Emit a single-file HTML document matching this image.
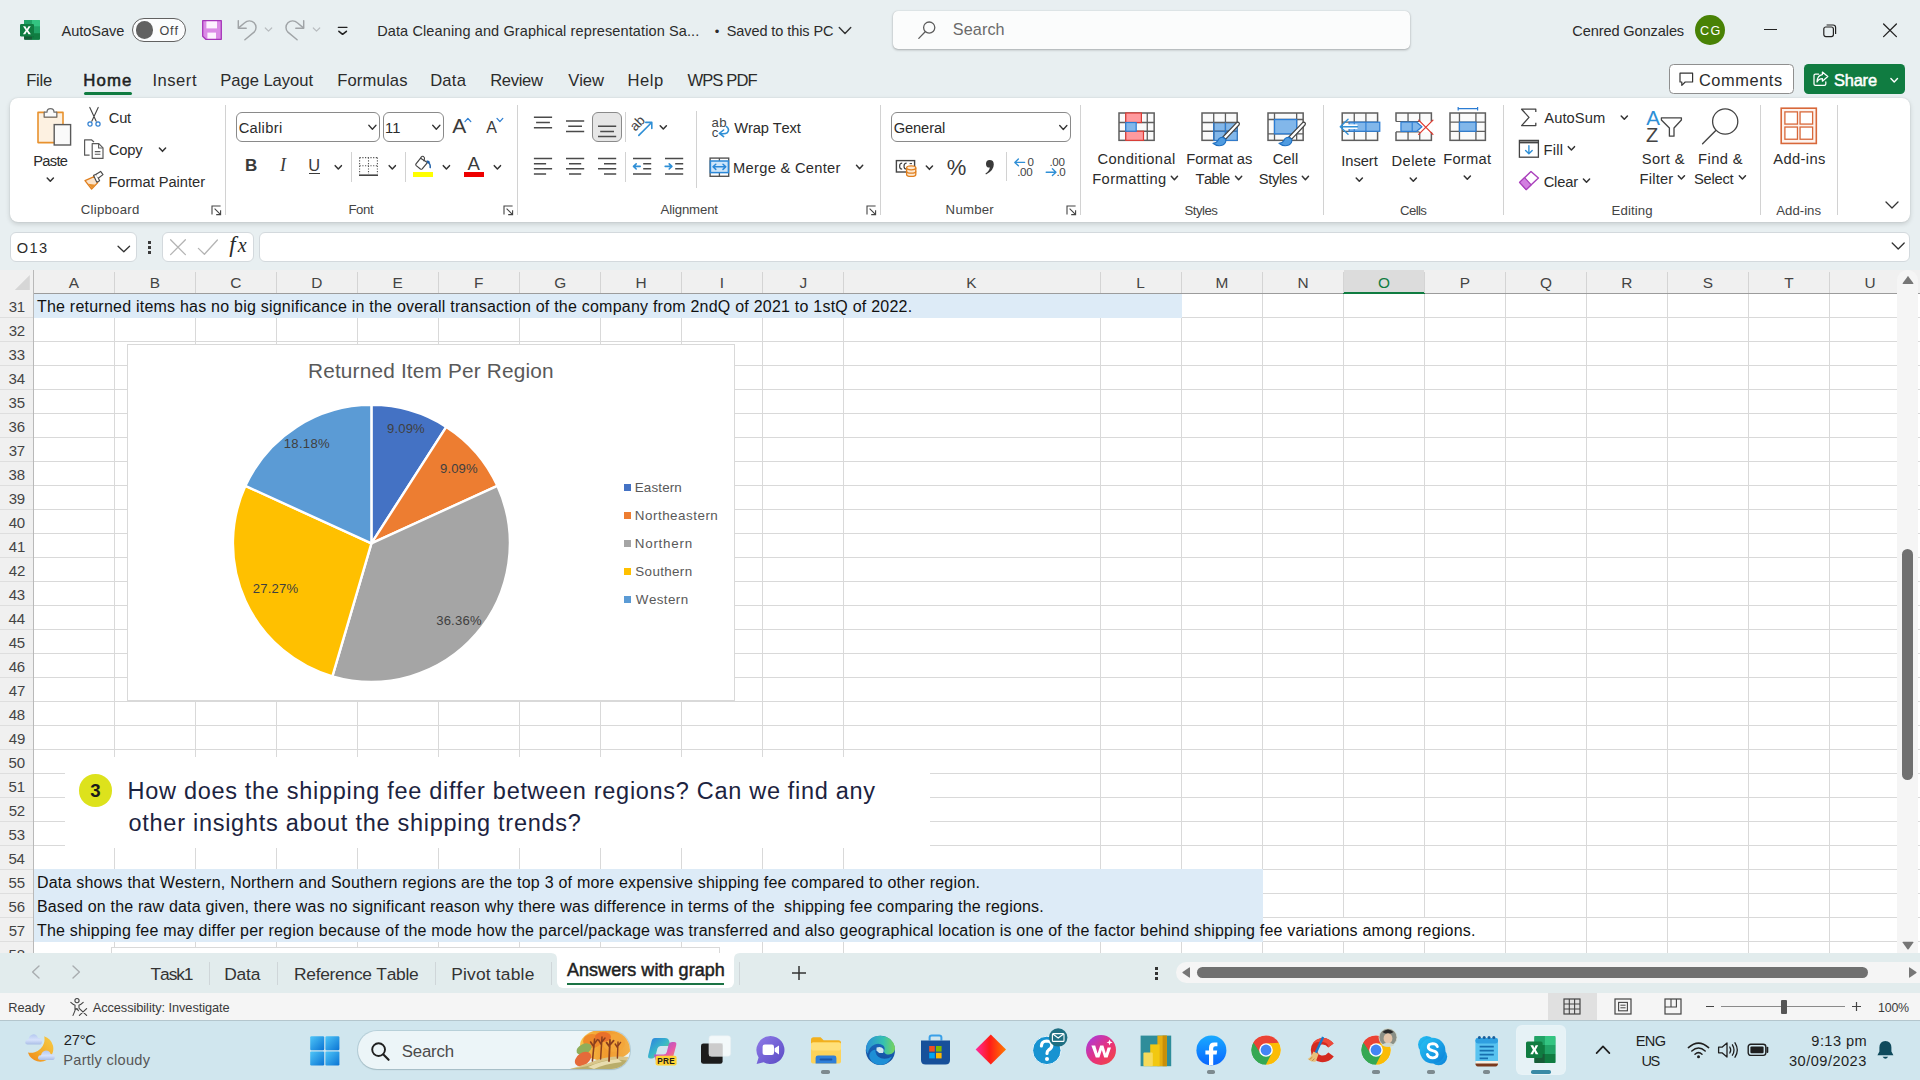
<!DOCTYPE html>
<html><head><meta charset="utf-8"><title>Excel</title><style>
html,body{margin:0;padding:0;overflow:hidden;}
body{width:1920px;height:1080px;overflow:hidden;background:#e8eff1;position:relative;font-family:"Liberation Sans",sans-serif;font-kerning:none;}
.t{position:absolute;white-space:pre;line-height:1;font-kerning:none;}
.b{position:absolute;}
</style></head><body>
<!-- p_title -->
<svg class="b" style="left:19px;top:19px;" width="22" height="22" viewBox="0 0 22 22">
<rect x="5" y="1" width="16" height="19.8" rx="1.2" fill="#21a366"/>
<rect x="5" y="1" width="8" height="6.6" fill="#21a366"/>
<path d="M13 1 H19.8 Q21 1 21 2.2 V7.6 H13 Z" fill="#33c481"/>
<rect x="5" y="7.6" width="8" height="6.6" fill="#107c41"/>
<rect x="13" y="7.6" width="8" height="6.6" fill="#21a366"/>
<path d="M5 14.2 H13 V20.8 H6.2 Q5 20.8 5 19.6 Z" fill="#185c37"/>
<path d="M13 14.2 H21 V19.6 Q21 20.8 19.8 20.8 H13 Z" fill="#107c41"/>
<rect x="6" y="6" width="9" height="12.4" fill="#0b5a2e" opacity="0.35"/>
<rect x="1" y="5" width="14" height="12.4" rx="1.2" fill="#107c41"/>
<path d="M4 7.2 L6.3 7.2 L7.9 10 L9.5 7.2 L11.7 7.2 L9.1 11.2 L11.9 15.3 L9.5 15.3 L7.9 12.5 L6.3 15.3 L3.9 15.3 L6.7 11.2 Z" fill="#fff"/>
</svg>
<span class="t" style="left:61.47px;top:24.00px;font-size:14.6px;color:#2b2b2b;letter-spacing:-0.048px;">AutoSave</span>
<div class="b" style="left:132px;top:17.5px;width:54px;height:24px;border:1px solid #616161;border-radius:12.5px;background:#fbfcfd;box-sizing:border-box;"></div>
<div class="b" style="left:135.6px;top:21.2px;width:17.6px;height:17.6px;border-radius:50%;background:#616161;"></div>
<span class="t" style="left:159.41px;top:25.00px;font-size:12.6px;color:#444;letter-spacing:0.881px;">Off</span>
<svg class="b" style="left:201px;top:19px;" width="22" height="22" viewBox="0 0 22 22">
<path d="M1.7 1.7 H20.3 V20.3 H4.8 L1.7 17.2 Z" fill="#db8be6" stroke="#a535b8" stroke-width="1.3" stroke-linejoin="round"/>
<rect x="5.4" y="2.4" width="10.6" height="7" fill="#fdf1ff"/>
<rect x="6.4" y="13.6" width="8.6" height="6" fill="#fdf1ff"/>
</svg>
<svg class="b" style="left:236px;top:18px;" width="24" height="24" viewBox="0 0 24 24"><path d="M2.3 2.6 V10.2 H10.2" fill="none" stroke="#a0a4a7" stroke-width="1.45" stroke-linecap="round" stroke-linejoin="round"/><path d="M2.6 9.9 L8.7 4.8 A6.6 6.6 0 0 1 18.07 14.17 L8.9 21.7" fill="none" stroke="#a0a4a7" stroke-width="1.45" stroke-linecap="round" stroke-linejoin="round"/></svg>
<svg class="b" style="left:0;top:0;overflow:visible" width="1" height="1"><path d="M265.30 28.00 L268.50 31.20 L271.70 28.00" fill="none" stroke="#b9bdc0" stroke-width="1.2" stroke-linecap="round" stroke-linejoin="round"/></svg>
<svg class="b" style="left:281.9px;top:18px;" width="24" height="24" viewBox="0 0 24 24"><g transform="translate(24,0) scale(-1,1)"><path d="M2.3 2.6 V10.2 H10.2" fill="none" stroke="#a0a4a7" stroke-width="1.45" stroke-linecap="round" stroke-linejoin="round"/><path d="M2.6 9.9 L8.7 4.8 A6.6 6.6 0 0 1 18.07 14.17 L8.9 21.7" fill="none" stroke="#a0a4a7" stroke-width="1.45" stroke-linecap="round" stroke-linejoin="round"/></g></svg>
<svg class="b" style="left:0;top:0;overflow:visible" width="1" height="1"><path d="M313.30 28.00 L316.50 31.20 L319.70 28.00" fill="none" stroke="#b9bdc0" stroke-width="1.2" stroke-linecap="round" stroke-linejoin="round"/></svg>
<svg class="b" style="left:336px;top:24px;" width="14" height="14" viewBox="0 0 14 14"><path d="M2.3 3.3 H11" stroke="#222" stroke-width="1.3" stroke-linecap="round"/><path d="M2.9 7.3 L6.6 10.3 L10.4 7.3" fill="none" stroke="#222" stroke-width="1.6" stroke-linecap="round" stroke-linejoin="round"/></svg>
<span class="t" style="left:377.21px;top:24.00px;font-size:14.5px;color:#2b2b2b;letter-spacing:0.113px;">Data Cleaning and Graphical representation Sa...</span>
<span class="t" style="left:714.79px;top:25.00px;font-size:13px;color:#2b2b2b;">•</span>
<span class="t" style="left:726.65px;top:24.00px;font-size:14.5px;color:#2b2b2b;letter-spacing:-0.074px;">Saved to this PC</span>
<svg class="b" style="left:0;top:0;overflow:visible" width="1" height="1"><path d="M839.25 27.40 L845.00 33.40 L850.75 27.40" fill="none" stroke="#333" stroke-width="1.4" stroke-linecap="round" stroke-linejoin="round"/></svg>
<div class="b" style="left:893px;top:11px;width:517px;height:38px;background:#fbfcfc;border-radius:5px;box-shadow:0 1px 2.5px rgba(0,0,0,.28),0 0 1px rgba(0,0,0,.18);"></div>
<svg class="b" style="left:917px;top:20px;" width="20" height="20" viewBox="0 0 20 20"><circle cx="12.2" cy="7.6" r="5.6" fill="none" stroke="#5c5c5c" stroke-width="1.3"/><path d="M8.2 11.8 L1.8 18.4" stroke="#5c5c5c" stroke-width="1.3" stroke-linecap="round"/></svg>
<span class="t" style="left:952.77px;top:21.00px;font-size:16.2px;color:#6a6a6a;letter-spacing:0.108px;">Search</span>
<span class="t" style="left:1572.27px;top:24.00px;font-size:14.6px;color:#2b2b2b;letter-spacing:-0.119px;">Cenred Gonzales</span>
<div class="b" style="left:1695px;top:15px;width:30px;height:30px;border-radius:50%;background:#498205;"></div>
<span class="t" style="left:1699.97px;top:25.00px;font-size:12.6px;color:#fff;letter-spacing:1.460px;">CG</span>
<div class="b" style="left:1764px;top:29px;width:12.5px;height:1.3px;background:#222;"></div>
<svg class="b" style="left:1822px;top:23px;" width="16" height="16" viewBox="0 0 16 16"><rect x="1.8" y="4" width="9.6" height="9.6" rx="2" fill="none" stroke="#222" stroke-width="1.2"/><path d="M4.6 2 H11 Q13.6 2 13.6 4.6 V11" fill="none" stroke="#222" stroke-width="1.2"/></svg>
<svg class="b" style="left:1882px;top:22px;" width="16" height="16" viewBox="0 0 16 16"><path d="M1.6 2 L14.4 14.6 M14.4 2 L1.6 14.6" stroke="#222" stroke-width="1.3" stroke-linecap="round"/></svg>
<span class="t" style="left:26.14px;top:73.00px;font-size:16.6px;color:#2b2b2b;letter-spacing:-0.218px;">File</span>
<span class="t" style="left:152.47px;top:73.00px;font-size:16.6px;color:#2b2b2b;letter-spacing:0.505px;">Insert</span>
<span class="t" style="left:220.24px;top:73.00px;font-size:16.6px;color:#2b2b2b;letter-spacing:-0.035px;">Page Layout</span>
<span class="t" style="left:337.14px;top:73.00px;font-size:16.6px;color:#2b2b2b;letter-spacing:0.183px;">Formulas</span>
<span class="t" style="left:430.14px;top:73.00px;font-size:16.6px;color:#2b2b2b;letter-spacing:0.261px;">Data</span>
<span class="t" style="left:490.14px;top:73.00px;font-size:16.6px;color:#2b2b2b;letter-spacing:-0.329px;">Review</span>
<span class="t" style="left:568.33px;top:73.00px;font-size:16.6px;color:#2b2b2b;letter-spacing:-0.131px;">View</span>
<span class="t" style="left:627.44px;top:73.00px;font-size:16.6px;color:#2b2b2b;letter-spacing:0.535px;">Help</span>
<span class="t" style="left:687.43px;top:73.00px;font-size:16.6px;color:#2b2b2b;letter-spacing:-0.899px;">WPS PDF</span>
<span class="t" style="left:83.32px;top:73.00px;font-size:16.8px;color:#1f1f1f;letter-spacing:1.102px;-webkit-text-stroke:0.55px #1f1f1f;">Home</span>
<div class="b" style="left:84.4px;top:91.6px;width:47.4px;height:3px;background:#107c41;border-radius:1.5px;"></div>
<div class="b" style="left:1669px;top:64px;width:125px;height:30px;background:#fff;border:1px solid #8f8f8f;border-radius:4.5px;box-sizing:border-box;"></div>
<svg class="b" style="left:1678px;top:71px;" width="17" height="17" viewBox="0 0 17 17"><path d="M2 2.2 H14.6 V11 H7.2 L3.8 14.4 V11 H2 Z" fill="none" stroke="#333" stroke-width="1.2" stroke-linejoin="round"/></svg>
<span class="t" style="left:1698.88px;top:72.00px;font-size:16.4px;color:#2b2b2b;letter-spacing:0.575px;">Comments</span>
<div class="b" style="left:1804px;top:64px;width:101px;height:30px;background:#107c41;border-radius:4.5px;"></div>
<svg class="b" style="left:1812px;top:70px;" width="18" height="18" viewBox="0 0 18 18"><path d="M6.6 4.2 H3.4 Q2 4.2 2 5.6 V14 Q2 15.4 3.4 15.4 H12.4 Q13.8 15.4 13.8 14 V11.8" fill="none" stroke="#fff" stroke-width="1.25" stroke-linecap="round"/><path d="M10.4 2 L15.8 6.6 L10.4 11.2 V8.6 C7.6 8.6 6.2 9.6 5 12 C5.2 7.8 7.2 5 10.4 4.6 Z" fill="none" stroke="#fff" stroke-width="1.25" stroke-linejoin="round"/></svg>
<span class="t" style="left:1833.96px;top:72.00px;font-size:16.4px;color:#fff;letter-spacing:-0.175px;-webkit-text-stroke:0.5px #fff;">Share</span>
<svg class="b" style="left:0;top:0;overflow:visible" width="1" height="1"><path d="M1890.90 78.60 L1894.20 82.00 L1897.50 78.60" fill="none" stroke="#fff" stroke-width="1.4" stroke-linecap="round" stroke-linejoin="round"/></svg>
<!-- p_ribbon -->
<div class="b" style="left:10px;top:98px;width:1900px;height:123.6px;background:#fff;border-radius:8px;box-shadow:0 2px 5px rgba(0,0,0,.15),0 0 1.5px rgba(0,0,0,.12);"></div>
<div class="b" style="left:225.3px;top:104.5px;width:1px;height:110.0px;background:#d2d2d2;"></div>
<div class="b" style="left:517px;top:104.5px;width:1px;height:110.0px;background:#d2d2d2;"></div>
<div class="b" style="left:880px;top:104.5px;width:1px;height:110.0px;background:#d2d2d2;"></div>
<div class="b" style="left:1080.2px;top:104.5px;width:1px;height:110.0px;background:#d2d2d2;"></div>
<div class="b" style="left:1323.2px;top:104.5px;width:1px;height:110.0px;background:#d2d2d2;"></div>
<div class="b" style="left:1503.2px;top:104.5px;width:1px;height:110.0px;background:#d2d2d2;"></div>
<div class="b" style="left:1760.3px;top:104.5px;width:1px;height:110.0px;background:#d2d2d2;"></div>
<div class="b" style="left:1837.2px;top:104.5px;width:1px;height:110.0px;background:#d2d2d2;"></div>
<svg class="b" style="left:35px;top:106px;" width="38" height="42" viewBox="0 0 38 42">
<path d="M3 6.4 H9.6 V11 H21.4 V6.4 H28 V36.6 H3 Z" fill="#fdf1e1" stroke="#e8912d" stroke-width="1.6" stroke-linejoin="round"/>
<path d="M9.2 11.2 V6.2 H12 Q12 2.6 15.5 2.6 Q19 2.6 19 6.2 H21.8 V11.2 Z" fill="#fafafa" stroke="#6e6e6e" stroke-width="1.2" stroke-linejoin="round"/>
<rect x="19.2" y="18.6" width="16.4" height="20.4" fill="#fafafa" stroke="#5a5a5a" stroke-width="1.4"/>
</svg>
<span class="t" style="left:33.19px;top:154.00px;font-size:14.7px;color:#2b2b2b;letter-spacing:-0.684px;">Paste</span>
<svg class="b" style="left:0;top:0;overflow:visible" width="1" height="1"><path d="M47.20 177.95 L50.30 181.25 L53.40 177.95" fill="none" stroke="#333" stroke-width="1.5" stroke-linecap="round" stroke-linejoin="round"/></svg>
<svg class="b" style="left:86px;top:106px;" width="16" height="22" viewBox="0 0 16 22">
<path d="M3.8 1.4 L10.2 15.2 M12.2 1.4 L5.8 15.2" stroke="#444" stroke-width="1.1" stroke-linecap="round"/>
<circle cx="4" cy="18" r="2.1" fill="none" stroke="#2f7fd1" stroke-width="1.2"/><circle cx="12" cy="18" r="2.1" fill="none" stroke="#2f7fd1" stroke-width="1.2"/></svg>
<span class="t" style="left:108.86px;top:111.00px;font-size:14.7px;color:#2b2b2b;letter-spacing:-0.320px;">Cut</span>
<svg class="b" style="left:83px;top:138px;" width="22" height="22" viewBox="0 0 22 22">
<path d="M6.6 17.2 H1.6 V1.8 H8.4 L11 4" fill="none" stroke="#5a5a5a" stroke-width="1.2" stroke-linejoin="round"/>
<path d="M9.2 5.6 H15.8 L20 9.8 V20.4 H9.2 Z" fill="#fff" stroke="#5a5a5a" stroke-width="1.2" stroke-linejoin="round"/>
<path d="M15.6 5.8 V10 H19.8" fill="none" stroke="#5a5a5a" stroke-width="1.1"/>
<path d="M11.8 13.6 H17.4 M11.8 16.2 H17.4" stroke="#5a5a5a" stroke-width="1.1"/></svg>
<span class="t" style="left:108.86px;top:143.00px;font-size:14.7px;color:#2b2b2b;letter-spacing:-0.151px;">Copy</span>
<svg class="b" style="left:0;top:0;overflow:visible" width="1" height="1"><path d="M159.40 148.05 L162.50 151.35 L165.60 148.05" fill="none" stroke="#333" stroke-width="1.5" stroke-linecap="round" stroke-linejoin="round"/></svg>
<svg class="b" style="left:83px;top:170px;" width="22" height="21" viewBox="0 0 22 21">
<path d="M2 10.6 L12.2 6.2 L14.8 12.6 L8.6 19 Z" fill="#fbe3c9" stroke="#e07f1e" stroke-width="1.3" stroke-linejoin="round"/>
<path d="M5.2 13.8 L9 18.4 L12.6 14.8 Z" fill="#e8912d"/>
<path d="M10.6 5.4 L13.4 4.2 L16.6 10.8 L13.8 12.2 Z" fill="#fff" stroke="#4a4a4a" stroke-width="1.15" stroke-linejoin="round"/>
<path d="M12.8 4.4 L17.6 1.4 L20 4.6 L15.2 8.2" fill="#fff" stroke="#4a4a4a" stroke-width="1.15" stroke-linejoin="round"/></svg>
<span class="t" style="left:108.39px;top:175.00px;font-size:14.7px;color:#2b2b2b;letter-spacing:-0.037px;">Format Painter</span>
<span class="t" style="left:80.74px;top:203.00px;font-size:13.2px;color:#444;letter-spacing:0.263px;">Clipboard</span>
<svg class="b" style="left:210.5px;top:204.6px;" width="11" height="11" viewBox="0 0 11 11"><path d="M9.6 1 H1 V9.6" fill="none" stroke="#444" stroke-width="1.1"/><path d="M3.6 3.6 L9.4 9.4 M9.6 5.2 V9.6 H5.2" fill="none" stroke="#444" stroke-width="1.1"/></svg>
<div class="b" style="left:236px;top:112px;width:144px;height:29.6px;border:1px solid #8a8a8a;border-radius:6px;box-sizing:border-box;background:#fff;"></div>
<span class="t" style="left:238.66px;top:121.00px;font-size:14.7px;color:#2b2b2b;letter-spacing:0.310px;">Calibri</span>
<svg class="b" style="left:0;top:0;overflow:visible" width="1" height="1"><path d="M368.80 125.30 L372.40 129.30 L376.00 125.30" fill="none" stroke="#333" stroke-width="1.3" stroke-linecap="round" stroke-linejoin="round"/></svg>
<div class="b" style="left:382.6px;top:112px;width:61px;height:29.6px;border:1px solid #8a8a8a;border-radius:6px;box-sizing:border-box;background:#fff;"></div>
<span class="t" style="left:385.08px;top:121.00px;font-size:14.7px;color:#2b2b2b;letter-spacing:-1px;">11</span>
<svg class="b" style="left:0;top:0;overflow:visible" width="1" height="1"><path d="M432.70 125.30 L436.30 129.30 L439.90 125.30" fill="none" stroke="#333" stroke-width="1.3" stroke-linecap="round" stroke-linejoin="round"/></svg>
<span class="t" style="left:452.26px;top:115.00px;font-size:21px;color:#3a3a3a;">A</span>
<svg class="b" style="left:464px;top:117px;" width="8" height="6" viewBox="0 0 8 6"><path d="M1 4.6 L3.9 1.4 L6.8 4.6" fill="none" stroke="#2f7fd1" stroke-width="1.3" stroke-linecap="round" stroke-linejoin="round"/></svg>
<span class="t" style="left:486.17px;top:120.00px;font-size:16px;color:#3a3a3a;">A</span>
<svg class="b" style="left:496px;top:117px;" width="8" height="6" viewBox="0 0 8 6"><path d="M1 1.4 L3.9 4.6 L6.8 1.4" fill="none" stroke="#2f7fd1" stroke-width="1.3" stroke-linecap="round" stroke-linejoin="round"/></svg>
<span class="t" style="left:244.88px;top:157.00px;font-size:17px;color:#3a3a3a;font-weight:700;">B</span>
<span class="t" style="left:280.00px;top:156.00px;font-size:18px;color:#3a3a3a;font-style:italic;font-family:'Liberation Serif',serif;">I</span>
<span class="t" style="left:308.14px;top:157.00px;font-size:16.4px;color:#3a3a3a;">U</span>
<div class="b" style="left:308.8px;top:173px;width:11.4px;height:1.2px;background:#3a3a3a;"></div>
<svg class="b" style="left:0;top:0;overflow:visible" width="1" height="1"><path d="M335.20 165.65 L338.30 168.95 L341.40 165.65" fill="none" stroke="#333" stroke-width="1.5" stroke-linecap="round" stroke-linejoin="round"/></svg>
<div class="b" style="left:351px;top:152px;width:1px;height:29.80000000000001px;background:#d2d2d2;"></div>
<svg class="b" style="left:358px;top:156px;" width="21" height="21" viewBox="0 0 21 21">
<path d="M1.6 1.6 H19.4 M1.6 1.6 V18 M19.4 1.6 V18 M10.5 1.6 V18 M1.6 9.8 H19.4" fill="none" stroke="#555" stroke-width="1.1" stroke-dasharray="1.2 1.5"/>
<path d="M1 19.2 H20" stroke="#444" stroke-width="1.6"/></svg>
<svg class="b" style="left:0;top:0;overflow:visible" width="1" height="1"><path d="M389.20 165.65 L392.30 168.95 L395.40 165.65" fill="none" stroke="#333" stroke-width="1.5" stroke-linecap="round" stroke-linejoin="round"/></svg>
<div class="b" style="left:405.3px;top:152px;width:1px;height:29.80000000000001px;background:#d2d2d2;"></div>
<svg class="b" style="left:412px;top:155px;" width="22" height="17" viewBox="0 0 22 17">
<path d="M8.6 3.2 L4 8.8 Q3.4 9.8 4.2 10.6 L8.4 14 Q9.4 14.6 10.2 13.8 L15.4 7.6 Z" fill="#fff" stroke="#444" stroke-width="1.2" stroke-linejoin="round"/>
<path d="M8.6 3.2 Q9.6 0.6 11.6 1.6 Q13 2.6 12.4 4.4 L11.6 6.2" fill="none" stroke="#444" stroke-width="1.1"/>
<path d="M15.8 7.4 Q18.6 8.6 18.2 12.6" fill="none" stroke="#1e5fa8" stroke-width="1.5" stroke-linecap="round"/>
<path d="M14.4 5.6 Q17.4 4.8 18.2 7.8 L15.6 8 Z" fill="#1e5fa8"/></svg>
<div class="b" style="left:413px;top:172px;width:19.8px;height:5.2px;background:#ffff00;"></div>
<svg class="b" style="left:0;top:0;overflow:visible" width="1" height="1"><path d="M443.30 165.65 L446.40 168.95 L449.50 165.65" fill="none" stroke="#333" stroke-width="1.5" stroke-linecap="round" stroke-linejoin="round"/></svg>
<span class="t" style="left:467.56px;top:155.00px;font-size:18.6px;color:#3a3a3a;">A</span>
<div class="b" style="left:464px;top:172px;width:19.9px;height:5.2px;background:#ee0000;"></div>
<svg class="b" style="left:0;top:0;overflow:visible" width="1" height="1"><path d="M494.30 165.65 L497.40 168.95 L500.50 165.65" fill="none" stroke="#333" stroke-width="1.5" stroke-linecap="round" stroke-linejoin="round"/></svg>
<span class="t" style="left:348.42px;top:203.00px;font-size:13.2px;color:#444;letter-spacing:-0.347px;">Font</span>
<svg class="b" style="left:502.8px;top:204.6px;" width="11" height="11" viewBox="0 0 11 11"><path d="M9.6 1 H1 V9.6" fill="none" stroke="#444" stroke-width="1.1"/><path d="M3.6 3.6 L9.4 9.4 M9.6 5.2 V9.6 H5.2" fill="none" stroke="#444" stroke-width="1.1"/></svg>
<svg class="b" style="left:0;top:0;overflow:visible" width="1" height="1"><path d="M533.90 117.20 H552.10 M536.10 122.50 H549.90 M533.90 127.80 H552.10 " stroke="#4a4a4a" stroke-width="1.5" fill="none"/></svg>
<svg class="b" style="left:0;top:0;overflow:visible" width="1" height="1"><path d="M566.00 121.00 H584.20 M568.20 126.30 H582.00 M566.00 131.60 H584.20 " stroke="#4a4a4a" stroke-width="1.5" fill="none"/></svg>
<div class="b" style="left:592px;top:112px;width:29.6px;height:29.7px;background:#e6e6e6;border:1px solid #8a8a8a;border-radius:6px;box-sizing:border-box;"></div>
<svg class="b" style="left:0;top:0;overflow:visible" width="1" height="1"><path d="M598.00 126.30 H616.20 M600.20 131.50 H614.00 M598.00 136.40 H616.20 " stroke="#4a4a4a" stroke-width="1.5" fill="none"/></svg>
<div class="b" style="left:624.6px;top:112px;width:1px;height:29.69999999999999px;background:#d2d2d2;"></div>
<svg class="b" style="left:630px;top:115px;" width="24" height="23" viewBox="0 0 24 23">
<g transform="translate(10.6,11.4) rotate(-45)"><text x="0" y="0" font-family="Liberation Sans" font-size="13.6" fill="#444" text-anchor="middle">ab</text></g>
<path d="M8.8 20.4 L21.4 7.8 M15.8 7.4 H21.8 V13.4" fill="none" stroke="#2f8fd6" stroke-width="1.6" stroke-linecap="round" stroke-linejoin="round"/></svg>
<svg class="b" style="left:0;top:0;overflow:visible" width="1" height="1"><path d="M660.20 125.75 L663.30 129.05 L666.40 125.75" fill="none" stroke="#333" stroke-width="1.5" stroke-linecap="round" stroke-linejoin="round"/></svg>
<div class="b" style="left:696.4px;top:111px;width:1px;height:77px;background:#d2d2d2;"></div>
<svg class="b" style="left:710px;top:117px;" width="21" height="21" viewBox="0 0 21 21">
<text x="1.6" y="10.4" font-family="Liberation Sans" font-size="13.2" fill="#444" letter-spacing="0.3">ab</text>
<text x="1.8" y="20" font-family="Liberation Sans" font-size="13.2" fill="#444">c</text>
<path d="M16.6 9.6 Q20 12.4 17.4 15.6 Q15.6 17.2 10.4 16.6 M13.6 13 L9.4 16.4 L13.6 19.6" fill="none" stroke="#2f8fd6" stroke-width="1.6" stroke-linecap="round" stroke-linejoin="round"/></svg>
<span class="t" style="left:734.24px;top:121.00px;font-size:14.7px;color:#2b2b2b;letter-spacing:-0.142px;">Wrap Text</span>
<svg class="b" style="left:0;top:0;overflow:visible" width="1" height="1"><path d="M533.90 158.60 H552.10 M533.90 163.70 H546.10 M533.90 168.80 H552.10 M533.90 173.90 H546.10 " stroke="#4a4a4a" stroke-width="1.5" fill="none"/></svg>
<svg class="b" style="left:0;top:0;overflow:visible" width="1" height="1"><path d="M566.00 158.60 H584.20 M569.00 163.70 H581.20 M566.00 168.80 H584.20 M569.00 173.90 H581.20 " stroke="#4a4a4a" stroke-width="1.5" fill="none"/></svg>
<svg class="b" style="left:0;top:0;overflow:visible" width="1" height="1"><path d="M598.00 158.60 H616.20 M604.00 163.70 H616.20 M598.00 168.80 H616.20 M604.00 173.90 H616.20 " stroke="#4a4a4a" stroke-width="1.5" fill="none"/></svg>
<div class="b" style="left:624.6px;top:152px;width:1px;height:29.599999999999994px;background:#d2d2d2;"></div>
<svg class="b" style="left:0;top:0;overflow:visible" width="1" height="1"><path d="M633.00 158.60 H651.20 M643.20 163.70 H651.20 M643.20 168.80 H651.20 M633.00 173.90 H651.20 " stroke="#4a4a4a" stroke-width="1.5" fill="none"/></svg><svg class="b" style="left:632px;top:161px;" width="10" height="11" viewBox="0 0 10 11"><path d="M1.6 5.4 H8.2 M4.2 2.8 L1.5 5.4 L4.2 8" fill="none" stroke="#2f8fd6" stroke-width="1.6" stroke-linecap="round" stroke-linejoin="round"/></svg>
<svg class="b" style="left:0;top:0;overflow:visible" width="1" height="1"><path d="M665.00 158.60 H683.20 M675.20 163.70 H683.20 M675.20 168.80 H683.20 M665.00 173.90 H683.20 " stroke="#4a4a4a" stroke-width="1.5" fill="none"/></svg><svg class="b" style="left:664px;top:161px;" width="10" height="11" viewBox="0 0 10 11"><path d="M1.2 5.4 H7.8 M5.2 2.8 L7.9 5.4 L5.2 8" fill="none" stroke="#2f8fd6" stroke-width="1.6" stroke-linecap="round" stroke-linejoin="round"/></svg>
<svg class="b" style="left:708.6px;top:157.3px;" width="21" height="20" viewBox="0 0 21 20">
<rect x="1.1" y="1.1" width="18.6" height="18.2" fill="#fff" stroke="#555" stroke-width="1.4"/>
<path d="M10.4 1 V4 M10.4 15.6 V19.4" stroke="#555" stroke-width="1.3"/>
<rect x="1.4" y="4" width="18" height="11.6" fill="#cfe6fa" stroke="#2b88d8" stroke-width="1.5"/>
<path d="M4.2 9.8 H16.6 M6.8 7.2 L4 9.8 L6.8 12.4 M14 7.2 L16.8 9.8 L14 12.4" fill="none" stroke="#2b88d8" stroke-width="1.5" stroke-linecap="round" stroke-linejoin="round"/></svg>
<span class="t" style="left:733.09px;top:161.00px;font-size:14.7px;color:#2b2b2b;letter-spacing:0.283px;">Merge &amp; Center</span>
<svg class="b" style="left:0;top:0;overflow:visible" width="1" height="1"><path d="M856.50 165.35 L859.60 168.65 L862.70 165.35" fill="none" stroke="#333" stroke-width="1.5" stroke-linecap="round" stroke-linejoin="round"/></svg>
<span class="t" style="left:660.47px;top:203.00px;font-size:13.2px;color:#444;letter-spacing:-0.135px;">Alignment</span>
<svg class="b" style="left:865.6px;top:204.6px;" width="11" height="11" viewBox="0 0 11 11"><path d="M9.6 1 H1 V9.6" fill="none" stroke="#444" stroke-width="1.1"/><path d="M3.6 3.6 L9.4 9.4 M9.6 5.2 V9.6 H5.2" fill="none" stroke="#444" stroke-width="1.1"/></svg>
<div class="b" style="left:891.2px;top:112px;width:179.6px;height:29.6px;border:1px solid #8a8a8a;border-radius:6px;box-sizing:border-box;background:#fff;"></div>
<span class="t" style="left:893.66px;top:121.00px;font-size:14.7px;color:#2b2b2b;letter-spacing:-0.098px;">General</span>
<svg class="b" style="left:0;top:0;overflow:visible" width="1" height="1"><path d="M1059.70 125.50 L1063.30 129.50 L1066.90 125.50" fill="none" stroke="#333" stroke-width="1.3" stroke-linecap="round" stroke-linejoin="round"/></svg>
<svg class="b" style="left:895px;top:159.4px;" width="23" height="19" viewBox="0 0 23 19">
<rect x="1.4" y="1.6" width="18.2" height="11.4" fill="#fff" stroke="#444" stroke-width="1.4"/>
<path d="M7.2 4.2 Q4.6 4.2 4.6 7.2 Q4.6 10.2 7.2 10.2 M11.6 4.2 Q9 4.2 9 7.2 Q9 10.2 11.6 10.2" fill="none" stroke="#444" stroke-width="1.2"/>
<path d="M14.6 4.6 H17" stroke="#444" stroke-width="1.1"/>
<path d="M11.6 8.8 V15.4 Q11.6 17.4 16.2 17.4 Q20.8 17.4 20.8 15.4 V8.8" fill="#fde9d2" stroke="#e07f1e" stroke-width="1.3"/>
<ellipse cx="16.2" cy="8.8" rx="4.6" ry="2" fill="#fde9d2" stroke="#e07f1e" stroke-width="1.3"/>
<path d="M11.6 12.2 Q11.6 14.2 16.2 14.2 Q20.8 14.2 20.8 12.2" fill="none" stroke="#e07f1e" stroke-width="1.2"/></svg>
<svg class="b" style="left:0;top:0;overflow:visible" width="1" height="1"><path d="M926.30 166.05 L929.40 169.35 L932.50 166.05" fill="none" stroke="#333" stroke-width="1.5" stroke-linecap="round" stroke-linejoin="round"/></svg>
<span class="t" style="left:946.83px;top:157.00px;font-size:22px;color:#3a3a3a;">%</span>
<svg class="b" style="left:984px;top:158.6px;" width="12" height="17" viewBox="0 0 12 17"><path d="M5.6 1 Q9.8 1 9.8 5.4 Q9.8 11.6 2 15.4 L1.4 14.6 Q5.4 12 5.8 8.6 Q2 8.8 2 5 Q2 1 5.6 1 Z" fill="#3a3a3a"/></svg>
<div class="b" style="left:1006.4px;top:152.3px;width:1px;height:29.099999999999994px;background:#d2d2d2;"></div>
<svg class="b" style="left:1013px;top:156.5px;" width="22" height="21" viewBox="0 0 22 21">
<path d="M2 5.4 H11.6 M5.4 2 L1.8 5.4 L5.4 8.8" fill="none" stroke="#2f8fd6" stroke-width="1.35" stroke-linecap="round" stroke-linejoin="round"/>
<text x="14.6" y="9.2" font-family="Liberation Sans" font-size="11.6" fill="#444">0</text>
<text x="4.2" y="19.2" font-family="Liberation Sans" font-size="11.6" fill="#444" letter-spacing="-0.3">.00</text></svg>
<svg class="b" style="left:1045px;top:156.5px;" width="22" height="21" viewBox="0 0 22 21">
<text x="4.4" y="9.2" font-family="Liberation Sans" font-size="11.6" fill="#444" letter-spacing="-0.3">.00</text>
<path d="M1.2 15.2 H10.8 M7.4 11.8 L11 15.2 L7.4 18.6" fill="none" stroke="#2f8fd6" stroke-width="1.35" stroke-linecap="round" stroke-linejoin="round"/>
<text x="11.4" y="19.2" font-family="Liberation Sans" font-size="11.6" fill="#444" letter-spacing="-0.3">.0</text></svg>
<span class="t" style="left:945.62px;top:203.00px;font-size:13.2px;color:#444;letter-spacing:0.249px;">Number</span>
<svg class="b" style="left:1066px;top:204.6px;" width="11" height="11" viewBox="0 0 11 11"><path d="M9.6 1 H1 V9.6" fill="none" stroke="#444" stroke-width="1.1"/><path d="M3.6 3.6 L9.4 9.4 M9.6 5.2 V9.6 H5.2" fill="none" stroke="#444" stroke-width="1.1"/></svg>
<svg class="b" style="left:1118.2px;top:112px;" width="38" height="30" viewBox="0 0 38 30">
<rect x="1" y="1" width="35.16" height="27.34" fill="#fafafa" stroke="#5e5e5e" stroke-width="1.5"/>
<path d="M7.77 1 V28.34 M29.26 1 V28.34 M1 10.51 H36.16 M1 19.23 H36.16" stroke="#5e5e5e" stroke-width="1.3" fill="none"/>
<rect x="7.77" y="1" width="15.62" height="9.51" fill="#ff9a9e" stroke="#dc3b35" stroke-width="1.2"/>
<rect x="7.77" y="19.23" width="17.71" height="9.11" fill="#ff9a9e" stroke="#dc3b35" stroke-width="1.2"/>
<rect x="7.77" y="10.51" width="10.42" height="8.72" fill="#82b7ea" stroke="#2b7cd3" stroke-width="1.2"/>
</svg>
<span class="t" style="left:1097.47px;top:152.00px;font-size:14.7px;color:#2b2b2b;letter-spacing:0.436px;">Conditional</span>
<span class="t" style="left:1092.19px;top:172.00px;font-size:14.7px;color:#2b2b2b;letter-spacing:0.421px;">Formatting</span>
<svg class="b" style="left:0;top:0;overflow:visible" width="1" height="1"><path d="M1171.30 176.35 L1174.40 179.65 L1177.50 176.35" fill="none" stroke="#333" stroke-width="1.5" stroke-linecap="round" stroke-linejoin="round"/></svg>
<svg class="b" style="left:1201.4px;top:112px;" width="42" height="38" viewBox="0 0 42 38">
<rect x="1" y="1" width="35.16" height="27.34" fill="#fafafa" stroke="#5e5e5e" stroke-width="1.5"/>
<rect x="12.72" y="10.51" width="23.44" height="17.84" fill="#82b7ea" stroke="#2b7cd3" stroke-width="1.1"/>
<path d="M12.72 1 V28.34 M24.44 1 V28.34 M1 10.51 H36.16 M1 19.23 H36.16" stroke="#5e5e5e" stroke-width="1.3" fill="none"/>
<path d="M12.72 10.51 V28.34 M24.44 10.51 V28.34 M12.72 19.23 H36.16" stroke="#2b7cd3" stroke-width="1.1" fill="none"/>
<path d="M37.46 10.38 Q39.02 11.16 37.98 12.98 L24.70 27.04 L21.83 24.96 L35.11 11.16 Q36.42 9.85 37.46 10.38 Z" fill="#fff" stroke="#444" stroke-width="1.2" stroke-linejoin="round"/>
<path d="M21.83 25.22 Q17.93 25.22 16.89 28.60 Q15.58 31.21 11.94 31.21 Q16.62 35.11 21.83 33.03 Q25.48 30.69 24.70 27.30 Z" fill="#4f9be0" stroke="#1e6fc0" stroke-width="1.1" stroke-linejoin="round"/>
</svg>
<span class="t" style="left:1186.19px;top:152.00px;font-size:14.7px;color:#2b2b2b;letter-spacing:0.009px;">Format as</span>
<span class="t" style="left:1195.58px;top:172.00px;font-size:14.7px;color:#2b2b2b;letter-spacing:-0.550px;">Table</span>
<svg class="b" style="left:0;top:0;overflow:visible" width="1" height="1"><path d="M1235.50 176.35 L1238.60 179.65 L1241.70 176.35" fill="none" stroke="#333" stroke-width="1.5" stroke-linecap="round" stroke-linejoin="round"/></svg>
<svg class="b" style="left:1266.5px;top:112px;" width="42" height="38" viewBox="0 0 42 38">
<rect x="1" y="1" width="35.16" height="27.34" fill="#fafafa" stroke="#5e5e5e" stroke-width="1.5"/>
<path d="M7.51 1 V28.34 M29.65 1 V28.34 M1 7.51 H36.16 M1 21.83 H36.16" stroke="#5e5e5e" stroke-width="1.3" fill="none"/>
<rect x="7.51" y="7.51" width="22.14" height="14.32" fill="#82b7ea" stroke="#2b7cd3" stroke-width="1.3"/>
<path d="M37.46 10.38 Q39.02 11.16 37.98 12.98 L24.70 27.04 L21.83 24.96 L35.11 11.16 Q36.42 9.85 37.46 10.38 Z" fill="#fff" stroke="#444" stroke-width="1.2" stroke-linejoin="round"/>
<path d="M21.83 25.22 Q17.93 25.22 16.89 28.60 Q15.58 31.21 11.94 31.21 Q16.62 35.11 21.83 33.03 Q25.48 30.69 24.70 27.30 Z" fill="#4f9be0" stroke="#1e6fc0" stroke-width="1.1" stroke-linejoin="round"/>
</svg>
<span class="t" style="left:1272.67px;top:152.00px;font-size:14.7px;color:#2b2b2b;letter-spacing:0.061px;">Cell</span>
<span class="t" style="left:1258.74px;top:172.00px;font-size:14.7px;color:#2b2b2b;letter-spacing:-0.288px;">Styles</span>
<svg class="b" style="left:0;top:0;overflow:visible" width="1" height="1"><path d="M1302.30 176.35 L1305.40 179.65 L1308.50 176.35" fill="none" stroke="#333" stroke-width="1.5" stroke-linecap="round" stroke-linejoin="round"/></svg>
<span class="t" style="left:1184.61px;top:204.00px;font-size:13.2px;color:#444;letter-spacing:-0.535px;">Styles</span>
<svg class="b" style="left:1337.1px;top:112px;" width="44" height="30" viewBox="0 0 44 30">
<rect x="5.20" y="1" width="35.39" height="27.35" fill="#fafafa" stroke="#5e5e5e" stroke-width="1.5"/>
<path d="M17.26 1 V28.35 M28.92 1 V28.35 M5.20 10.20 H40.59 M5.20 19.28 H40.59" stroke="#5e5e5e" stroke-width="1.3" fill="none"/>
<rect x="12.07" y="10.20" width="30.72" height="9.07" fill="#82b7ea" stroke="#2b7cd3" stroke-width="1.2"/>
<path d="M28.92 10.20 V19.28 M17.26 10.20 V19.28" stroke="#2b7cd3" stroke-width="1.1"/>
<path d="M20.50 12.41 H9.48 V17.07 H20.50 Z" fill="#fff" stroke="none"/>
<path d="M20.50 14.74 H3.52 M11.04 7.22 L3.26 14.74 L11.04 22.26" fill="none" stroke="#2f8fd6" stroke-width="1.4" stroke-linecap="round" stroke-linejoin="round"/>
</svg>
<span class="t" style="left:1341.35px;top:154.00px;font-size:14.7px;color:#2b2b2b;letter-spacing:-0.062px;">Insert</span>
<svg class="b" style="left:0;top:0;overflow:visible" width="1" height="1"><path d="M1356.20 177.95 L1359.30 181.25 L1362.40 177.95" fill="none" stroke="#333" stroke-width="1.5" stroke-linecap="round" stroke-linejoin="round"/></svg>
<svg class="b" style="left:1395.2px;top:112px;" width="40" height="30" viewBox="0 0 40 30">
<rect x="1" y="1" width="35.39" height="27.35" fill="#fafafa" stroke="#5e5e5e" stroke-width="1.5"/>
<path d="M13.05 1 V28.35 M24.72 1 V28.35" stroke="#5e5e5e" stroke-width="1.3" fill="none"/>
<rect x="-1" y="9.55" width="38.89" height="10.37" fill="#fff"/>
<path d="M1 9.55 H24.33 M1 19.92 H24.33" stroke="#5e5e5e" stroke-width="1.1"/>
<path d="M5.93 10.20 H21.74 L26.92 14.74 L21.74 19.28 H5.93 Z" fill="#82b7ea" stroke="#2b7cd3" stroke-width="1.2" stroke-linejoin="round"/>
<path d="M17.20 10.20 V19.28" stroke="#2b7cd3" stroke-width="1.1"/>
<path d="M23.68 8.13 L37.94 22.39 M37.94 8.13 L23.68 22.39" stroke="#e03c32" stroke-width="1.3" stroke-linecap="round"/>
</svg>
<span class="t" style="left:1391.59px;top:154.00px;font-size:14.7px;color:#2b2b2b;letter-spacing:0.392px;">Delete</span>
<svg class="b" style="left:0;top:0;overflow:visible" width="1" height="1"><path d="M1410.20 177.95 L1413.30 181.25 L1416.40 177.95" fill="none" stroke="#333" stroke-width="1.5" stroke-linecap="round" stroke-linejoin="round"/></svg>
<svg class="b" style="left:1449.3px;top:107px;" width="40" height="36" viewBox="0 0 40 36">
<path d="M9.17 1.6 H28.61 M9.17 0 V3.4 M28.61 0 V3.4" stroke="#2b7cd3" stroke-width="1.2"/>
<rect x="1" y="6" width="35.39" height="27.35" fill="#fafafa" stroke="#5e5e5e" stroke-width="1.5"/>
<path d="M10.46 6 V33.35 M26.92 6 V33.35 M1 15.20 H36.39 M1 24.28 H36.39" stroke="#5e5e5e" stroke-width="1.3" fill="none"/>
<rect x="10.46" y="15.20" width="16.46" height="9.07" fill="#82b7ea" stroke="#2b7cd3" stroke-width="1.2"/>
</svg>
<span class="t" style="left:1443.19px;top:152.00px;font-size:14.7px;color:#2b2b2b;letter-spacing:0.270px;">Format</span>
<svg class="b" style="left:0;top:0;overflow:visible" width="1" height="1"><path d="M1464.20 175.95 L1467.30 179.25 L1470.40 175.95" fill="none" stroke="#333" stroke-width="1.5" stroke-linecap="round" stroke-linejoin="round"/></svg>
<span class="t" style="left:1399.94px;top:204.00px;font-size:13.2px;color:#444;letter-spacing:-0.576px;">Cells</span>
<svg class="b" style="left:1520px;top:108.3px;" width="18" height="19" viewBox="0 0 18 19"><path d="M15.8 4 V1.2 H1.6 L9 9.4 L1.6 17.6 H15.8 V14.8" fill="none" stroke="#444" stroke-width="1.3" stroke-linejoin="round"/></svg>
<span class="t" style="left:1544.37px;top:111.00px;font-size:14.7px;color:#2b2b2b;letter-spacing:0.070px;">AutoSum</span>
<svg class="b" style="left:0;top:0;overflow:visible" width="1" height="1"><path d="M1621.20 115.95 L1624.30 119.25 L1627.40 115.95" fill="none" stroke="#333" stroke-width="1.5" stroke-linecap="round" stroke-linejoin="round"/></svg>
<svg class="b" style="left:1518px;top:139px;" width="22" height="20" viewBox="0 0 22 20">
<rect x="1.4" y="1.4" width="19" height="16.8" fill="#fff" stroke="#444" stroke-width="1.3"/>
<path d="M1.4 3.4 H20.4" stroke="#444" stroke-width="2"/>
<path d="M10.9 6.6 V14.6 M7.6 11.6 L10.9 14.8 L14.2 11.6" fill="none" stroke="#2f8fd6" stroke-width="1.4" stroke-linecap="round" stroke-linejoin="round"/></svg>
<span class="t" style="left:1543.49px;top:143.00px;font-size:14.7px;color:#2b2b2b;letter-spacing:0.234px;">Fill</span>
<svg class="b" style="left:0;top:0;overflow:visible" width="1" height="1"><path d="M1568.30 146.65 L1571.40 149.95 L1574.50 146.65" fill="none" stroke="#333" stroke-width="1.5" stroke-linecap="round" stroke-linejoin="round"/></svg>
<svg class="b" style="left:1518px;top:170.4px;" width="22" height="21" viewBox="0 0 22 21">
<path d="M1.6 12.4 L13 1.4 L20.4 8 L8.2 19.6 Z" fill="#fff" stroke="#a93fbb" stroke-width="1.4" stroke-linejoin="round"/>
<path d="M1.6 12.4 L6.6 7.6 L13.2 14.8 L8.2 19.6 Z" fill="#d27fe0" stroke="#a93fbb" stroke-width="1.2" stroke-linejoin="round"/></svg>
<span class="t" style="left:1543.67px;top:175.00px;font-size:14.7px;color:#2b2b2b;letter-spacing:-0.164px;">Clear</span>
<svg class="b" style="left:0;top:0;overflow:visible" width="1" height="1"><path d="M1583.40 178.95 L1586.50 182.25 L1589.60 178.95" fill="none" stroke="#333" stroke-width="1.5" stroke-linecap="round" stroke-linejoin="round"/></svg>
<span class="t" style="left:1646.16px;top:108.00px;font-size:20.6px;color:#2f8fd6;">A</span>
<span class="t" style="left:1645.98px;top:125.00px;font-size:20px;color:#444;">Z</span>
<svg class="b" style="left:1660px;top:116px;" width="23" height="22" viewBox="0 0 23 22"><path d="M1.4 1.8 H21.4 V4 L14 12 V20.2 H9.4 V12 L1.4 4 Z" fill="#fff" stroke="#444" stroke-width="1.3" stroke-linejoin="round"/></svg>
<span class="t" style="left:1641.74px;top:152.00px;font-size:14.7px;color:#2b2b2b;letter-spacing:0.407px;">Sort &amp;</span>
<span class="t" style="left:1639.59px;top:172.00px;font-size:14.7px;color:#2b2b2b;letter-spacing:0.195px;">Filter</span>
<svg class="b" style="left:0;top:0;overflow:visible" width="1" height="1"><path d="M1678.30 175.75 L1681.40 179.05 L1684.50 175.75" fill="none" stroke="#333" stroke-width="1.5" stroke-linecap="round" stroke-linejoin="round"/></svg>
<svg class="b" style="left:1700px;top:107px;" width="40" height="39" viewBox="0 0 40 39"><circle cx="25.2" cy="14.5" r="12.6" fill="none" stroke="#444" stroke-width="1.3"/><path d="M15.8 23.6 L2.6 36.8" stroke="#444" stroke-width="1.4" stroke-linecap="round"/></svg>
<span class="t" style="left:1698.09px;top:152.00px;font-size:14.7px;color:#2b2b2b;letter-spacing:0.408px;">Find &amp;</span>
<span class="t" style="left:1694.04px;top:172.00px;font-size:14.7px;color:#2b2b2b;letter-spacing:-0.239px;">Select</span>
<svg class="b" style="left:0;top:0;overflow:visible" width="1" height="1"><path d="M1739.30 175.75 L1742.40 179.05 L1745.50 175.75" fill="none" stroke="#333" stroke-width="1.5" stroke-linecap="round" stroke-linejoin="round"/></svg>
<span class="t" style="left:1611.62px;top:204.00px;font-size:13.2px;color:#444;letter-spacing:0.095px;">Editing</span>
<svg class="b" style="left:1780.2px;top:107.2px;" width="40" height="40" viewBox="0 0 40 40"><rect x="1.2" y="1.2" width="35.11" height="35.24" fill="#fdf3ee" stroke="#d8683a" stroke-width="1.6"/><rect x="4.89" y="4.89" width="12.57" height="12.18" fill="#fff" stroke="#d8683a" stroke-width="1.3"/><rect x="20.05" y="4.89" width="12.57" height="12.18" fill="#fff" stroke="#d8683a" stroke-width="1.3"/><rect x="4.89" y="20.05" width="12.57" height="12.18" fill="#fff" stroke="#d8683a" stroke-width="1.3"/><rect x="20.05" y="20.05" width="12.57" height="12.18" fill="#fff" stroke="#d8683a" stroke-width="1.3"/></svg>
<span class="t" style="left:1773.37px;top:152.00px;font-size:14.7px;color:#2b2b2b;letter-spacing:0.369px;">Add-ins</span>
<span class="t" style="left:1776.27px;top:204.00px;font-size:13.2px;color:#444;letter-spacing:0.007px;">Add-ins</span>
<svg class="b" style="left:0;top:0;overflow:visible" width="1" height="1"><path d="M1886.00 202.00 L1892.00 208.00 L1898.00 202.00" fill="none" stroke="#333" stroke-width="1.3" stroke-linecap="round" stroke-linejoin="round"/></svg>
<!-- p_fbar -->
<div class="b" style="left:10px;top:232px;width:127px;height:30px;background:#fff;border:1px solid #d3d9dd;border-radius:6px;box-sizing:border-box;"></div>
<span class="t" style="left:16.81px;top:241.00px;font-size:14.6px;color:#2b2b2b;letter-spacing:1.410px;">O13</span>
<svg class="b" style="left:0;top:0;overflow:visible" width="1" height="1"><path d="M118.05 246.20 L123.80 251.80 L129.55 246.20" fill="none" stroke="#333" stroke-width="1.3" stroke-linecap="round" stroke-linejoin="round"/></svg>
<div class="b" style="left:148px;top:241px;width:3px;height:3px;background:#3a3a3a;"></div>
<div class="b" style="left:148px;top:246px;width:3px;height:3px;background:#3a3a3a;"></div>
<div class="b" style="left:148px;top:251px;width:3px;height:3px;background:#3a3a3a;"></div>
<div class="b" style="left:162px;top:232px;width:92px;height:30px;background:#fff;border:1px solid #d3d9dd;border-radius:6px;box-sizing:border-box;"></div>
<svg class="b" style="left:169px;top:238px;" width="18" height="18" viewBox="0 0 18 18"><path d="M1.6 1.8 L16.4 16.6 M16.4 1.8 L1.6 16.6" stroke="#b4b4b4" stroke-width="1.3" stroke-linecap="round"/></svg>
<svg class="b" style="left:197px;top:238px;" width="22" height="18" viewBox="0 0 22 18"><path d="M1.4 10.4 L7.4 16.2 L20.4 2" fill="none" stroke="#b4b4b4" stroke-width="1.3" stroke-linecap="round" stroke-linejoin="round"/></svg>
<span class="t" style="left:229.35px;top:233.00px;font-size:23px;color:#2a2a2a;font-style:italic;font-family:'Liberation Serif',serif;">f</span>
<span class="t" style="left:237.80px;top:235.00px;font-size:20px;color:#2a2a2a;font-style:italic;font-family:'Liberation Serif',serif;">x</span>
<div class="b" style="left:259px;top:232px;width:1651px;height:30px;background:#fff;border:1px solid #d3d9dd;border-radius:6px;box-sizing:border-box;"></div>
<svg class="b" style="left:0;top:0;overflow:visible" width="1" height="1"><path d="M1892.20 243.00 L1898.20 249.00 L1904.20 243.00" fill="none" stroke="#333" stroke-width="1.3" stroke-linecap="round" stroke-linejoin="round"/></svg>
<!-- p_grid -->
<div class="b" style="left:0px;top:270px;width:1920px;height:683px;background:#fff;"></div>
<svg class="b" style="left:0;top:0" width="1920" height="953" shape-rendering="crispEdges"><path d="M114.5 293 V953 M195.5 293 V953 M276.5 293 V953 M357.5 293 V953 M438.5 293 V953 M519.5 293 V953 M600.5 293 V953 M681.5 293 V953 M762.5 293 V953 M843.5 293 V953 M1100.5 293 V953 M1181.5 293 V953 M1262.5 293 V953 M1343.5 293 V953 M1424.5 293 V953 M1505.5 293 V953 M1586.5 293 V953 M1667.5 293 V953 M1748.5 293 V953 M1829.5 293 V953 M1910.5 293 V953 M34 317.5 H1920 M34 341.5 H1920 M34 365.5 H1920 M34 389.5 H1920 M34 413.5 H1920 M34 437.5 H1920 M34 461.5 H1920 M34 485.5 H1920 M34 509.5 H1920 M34 533.5 H1920 M34 557.5 H1920 M34 581.5 H1920 M34 605.5 H1920 M34 629.5 H1920 M34 653.5 H1920 M34 677.5 H1920 M34 701.5 H1920 M34 725.5 H1920 M34 749.5 H1920 M34 773.5 H1920 M34 797.5 H1920 M34 821.5 H1920 M34 845.5 H1920 M34 869.5 H1920 M34 893.5 H1920 M34 917.5 H1920 M34 941.5 H1920 " stroke="#d9d9d9" stroke-width="1" fill="none"/></svg>
<div class="b" style="left:34px;top:294px;width:1148px;height:24px;background:#ddebf7;"></div>
<div class="b" style="left:34px;top:869px;width:1229px;height:73px;background:#ddebf7;"></div>
<div class="b" style="left:1343px;top:918px;width:1px;height:23px;background:#fff;"></div>
<div class="b" style="left:1424px;top:918px;width:1px;height:23px;background:#fff;"></div>
<span class="t" style="left:36.95px;top:299.00px;font-size:16px;color:#111;letter-spacing:0.226px;">The returned items has no big significance in the overall transaction of the company from 2ndQ of 2021 to 1stQ of 2022.</span>
<span class="t" style="left:36.89px;top:875.00px;font-size:16px;color:#111;letter-spacing:0.225px;">Data shows that Western, Northern and Southern regions are the top 3 of more expensive shipping fee compared to other region.</span>
<span class="t" style="left:36.89px;top:899.00px;font-size:16px;color:#111;letter-spacing:0.182px;">Based on the raw data given, there was no significant reason why there was difference in terms of the  shipping fee comparing the regions.</span>
<span class="t" style="left:36.95px;top:923.00px;font-size:16px;color:#111;letter-spacing:0.203px;">The shipping fee may differ per region because of the mode how the parcel/package was transferred and also geographical location is one of the factor behind shipping fee variations among regions.</span>
<div class="b" style="left:127px;top:344px;width:608px;height:357px;background:#fff;border:1px solid #d9d9d9;box-sizing:border-box;"></div>
<span class="t" style="left:307.99px;top:361.00px;font-size:20.8px;color:#595959;letter-spacing:0.174px;">Returned Item Per Region</span>
<svg class="b" style="left:0;top:0" width="760" height="710"><path d="M371.40 543.40 L371.40 404.90 A138.5 138.5 0 0 1 446.28 426.89 Z" fill="#4472c4" stroke="#fff" stroke-width="2.4" stroke-linejoin="round"/><path d="M371.40 543.40 L446.28 426.89 A138.5 138.5 0 0 1 497.38 485.87 Z" fill="#ed7d31" stroke="#fff" stroke-width="2.4" stroke-linejoin="round"/><path d="M371.40 543.40 L497.38 485.87 A138.5 138.5 0 0 1 332.38 676.29 Z" fill="#a5a5a5" stroke="#fff" stroke-width="2.4" stroke-linejoin="round"/><path d="M371.40 543.40 L332.38 676.29 A138.5 138.5 0 0 1 245.42 485.87 Z" fill="#ffc000" stroke="#fff" stroke-width="2.4" stroke-linejoin="round"/><path d="M371.40 543.40 L245.42 485.87 A138.5 138.5 0 0 1 371.40 404.90 Z" fill="#5b9bd5" stroke="#fff" stroke-width="2.4" stroke-linejoin="round"/></svg>
<span class="t" style="left:387.10px;top:422.00px;font-size:13.1px;color:#404040;letter-spacing:0.130px;">9.09%</span>
<span class="t" style="left:440.00px;top:462.00px;font-size:13.1px;color:#404040;letter-spacing:0.130px;">9.09%</span>
<span class="t" style="left:436.20px;top:614.00px;font-size:13.1px;color:#404040;letter-spacing:0.186px;">36.36%</span>
<span class="t" style="left:252.65px;top:582.00px;font-size:13.1px;color:#404040;letter-spacing:0.217px;">27.27%</span>
<span class="t" style="left:283.80px;top:437.00px;font-size:13.1px;color:#404040;letter-spacing:0.285px;">18.18%</span>
<div class="b" style="left:624.3px;top:484.20000000000005px;width:6.8px;height:6.8px;background:#4472c4;"></div>
<span class="t" style="left:634.80px;top:481.00px;font-size:13.4px;color:#595959;letter-spacing:0.146px;">Eastern</span>
<div class="b" style="left:624.3px;top:512.2px;width:6.8px;height:6.8px;background:#ed7d31;"></div>
<span class="t" style="left:634.80px;top:509.00px;font-size:13.4px;color:#595959;letter-spacing:0.509px;">Northeastern</span>
<div class="b" style="left:624.3px;top:540.2px;width:6.8px;height:6.8px;background:#a5a5a5;"></div>
<span class="t" style="left:634.80px;top:537.00px;font-size:13.4px;color:#595959;letter-spacing:0.746px;">Northern</span>
<div class="b" style="left:624.3px;top:568.2px;width:6.8px;height:6.8px;background:#ffc000;"></div>
<span class="t" style="left:635.30px;top:565.00px;font-size:13.4px;color:#595959;letter-spacing:0.354px;">Southern</span>
<div class="b" style="left:624.3px;top:596.2px;width:6.8px;height:6.8px;background:#5b9bd5;"></div>
<span class="t" style="left:635.85px;top:593.00px;font-size:13.4px;color:#595959;letter-spacing:0.404px;">Western</span>
<div class="b" style="left:65px;top:757px;width:865px;height:91px;background:#fff;"></div>
<div class="b" style="left:79.4px;top:774.2px;width:32.6px;height:32.6px;background:#dde21c;border-radius:50%;"></div>
<span class="t" style="left:90.19px;top:782.00px;font-size:18.6px;color:#1a1a1a;font-weight:700;">3</span>
<span class="t" style="left:127.57px;top:780.00px;font-size:23.5px;color:#1c2340;letter-spacing:0.698px;">How does the shipping fee differ between regions? Can we find any</span>
<span class="t" style="left:128.51px;top:812.00px;font-size:23.5px;color:#1c2340;letter-spacing:0.726px;">other insights about the shipping trends?</span>
<div class="b" style="left:111px;top:947px;width:609px;height:40px;background:#fff;border:1px solid #d9d9d9;box-sizing:border-box;"></div>
<div class="b" style="left:0px;top:270px;width:1920px;height:23px;background:#f0f0f0;"></div>
<div class="b" style="left:0px;top:270px;width:33px;height:683px;background:#f0f0f0;"></div>
<div class="b" style="left:1344px;top:270px;width:80px;height:23px;background:#dcdcdc;"></div>
<div class="b" style="left:1343px;top:291.5px;width:82px;height:2.5px;background:#107c41;"></div>
<svg class="b" style="left:0;top:0" width="1920" height="953" shape-rendering="crispEdges"><path d="M114.5 272 V293 M195.5 272 V293 M276.5 272 V293 M357.5 272 V293 M438.5 272 V293 M519.5 272 V293 M600.5 272 V293 M681.5 272 V293 M762.5 272 V293 M843.5 272 V293 M1100.5 272 V293 M1181.5 272 V293 M1262.5 272 V293 M1343.5 272 V293 M1424.5 272 V293 M1505.5 272 V293 M1586.5 272 V293 M1667.5 272 V293 M1748.5 272 V293 M1829.5 272 V293 M1910.5 272 V293 " stroke="#d4d4d4" stroke-width="1" fill="none"/><path d="M33.5 270 V953" stroke="#b9b9b9" stroke-width="1" fill="none"/><path d="M34 293.5 H1343 M1425 293.5 H1920" stroke="#9c9c9c" stroke-width="1" fill="none"/></svg>
<svg class="b" style="left:0;top:0" width="40" height="953" shape-rendering="crispEdges"><path d="M0 317.5 H33 M0 341.5 H33 M0 365.5 H33 M0 389.5 H33 M0 413.5 H33 M0 437.5 H33 M0 461.5 H33 M0 485.5 H33 M0 509.5 H33 M0 533.5 H33 M0 557.5 H33 M0 581.5 H33 M0 605.5 H33 M0 629.5 H33 M0 653.5 H33 M0 677.5 H33 M0 701.5 H33 M0 725.5 H33 M0 749.5 H33 M0 773.5 H33 M0 797.5 H33 M0 821.5 H33 M0 845.5 H33 M0 869.5 H33 M0 893.5 H33 M0 917.5 H33 M0 941.5 H33 " stroke="#dedede" stroke-width="1" fill="none"/></svg>
<svg class="b" style="left:14px;top:274px;" width="17" height="17" viewBox="0 0 17 17"><path d="M15.8 1 V16 H0.8 Z" fill="#d6d6d6"/></svg>
<span class="t" style="left:68.86px;top:275.00px;font-size:15.4px;color:#444;">A</span>
<span class="t" style="left:149.63px;top:275.00px;font-size:15.4px;color:#444;">B</span>
<span class="t" style="left:230.34px;top:275.00px;font-size:15.4px;color:#444;">C</span>
<span class="t" style="left:311.17px;top:275.00px;font-size:15.4px;color:#444;">D</span>
<span class="t" style="left:392.56px;top:275.00px;font-size:15.4px;color:#444;">E</span>
<span class="t" style="left:473.97px;top:275.00px;font-size:15.4px;color:#444;">F</span>
<span class="t" style="left:554.19px;top:275.00px;font-size:15.4px;color:#444;">G</span>
<span class="t" style="left:635.43px;top:275.00px;font-size:15.4px;color:#444;">H</span>
<span class="t" style="left:719.86px;top:275.00px;font-size:15.4px;color:#444;">I</span>
<span class="t" style="left:799.60px;top:275.00px;font-size:15.4px;color:#444;">J</span>
<span class="t" style="left:966.32px;top:275.00px;font-size:15.4px;color:#444;">K</span>
<span class="t" style="left:1136.34px;top:275.00px;font-size:15.4px;color:#444;">L</span>
<span class="t" style="left:1215.59px;top:275.00px;font-size:15.4px;color:#444;">M</span>
<span class="t" style="left:1297.43px;top:275.00px;font-size:15.4px;color:#444;">N</span>
<span class="t" style="left:1378.02px;top:275.00px;font-size:15.4px;color:#107c41;">O</span>
<span class="t" style="left:1459.63px;top:275.00px;font-size:15.4px;color:#444;">P</span>
<span class="t" style="left:1540.02px;top:275.00px;font-size:15.4px;color:#444;">Q</span>
<span class="t" style="left:1621.16px;top:275.00px;font-size:15.4px;color:#444;">R</span>
<span class="t" style="left:1702.86px;top:275.00px;font-size:15.4px;color:#444;">S</span>
<span class="t" style="left:1784.30px;top:275.00px;font-size:15.4px;color:#444;">T</span>
<span class="t" style="left:1864.43px;top:275.00px;font-size:15.4px;color:#444;">U</span>
<span class="t" style="left:8.63px;top:299.00px;font-size:15px;color:#444;letter-spacing:-0.200px;">31</span>
<span class="t" style="left:8.65px;top:323.00px;font-size:15px;color:#444;letter-spacing:-0.200px;">32</span>
<span class="t" style="left:8.60px;top:347.00px;font-size:15px;color:#444;letter-spacing:-0.200px;">33</span>
<span class="t" style="left:8.49px;top:371.00px;font-size:15px;color:#444;letter-spacing:-0.200px;">34</span>
<span class="t" style="left:8.58px;top:395.00px;font-size:15px;color:#444;letter-spacing:-0.200px;">35</span>
<span class="t" style="left:8.60px;top:419.00px;font-size:15px;color:#444;letter-spacing:-0.200px;">36</span>
<span class="t" style="left:8.65px;top:443.00px;font-size:15px;color:#444;letter-spacing:-0.200px;">37</span>
<span class="t" style="left:8.60px;top:467.00px;font-size:15px;color:#444;letter-spacing:-0.200px;">38</span>
<span class="t" style="left:8.63px;top:491.00px;font-size:15px;color:#444;letter-spacing:-0.200px;">39</span>
<span class="t" style="left:8.68px;top:515.00px;font-size:15px;color:#444;letter-spacing:-0.200px;">40</span>
<span class="t" style="left:8.75px;top:539.00px;font-size:15px;color:#444;letter-spacing:-0.200px;">41</span>
<span class="t" style="left:8.77px;top:563.00px;font-size:15px;color:#444;letter-spacing:-0.200px;">42</span>
<span class="t" style="left:8.72px;top:587.00px;font-size:15px;color:#444;letter-spacing:-0.200px;">43</span>
<span class="t" style="left:8.61px;top:611.00px;font-size:15px;color:#444;letter-spacing:-0.200px;">44</span>
<span class="t" style="left:8.70px;top:635.00px;font-size:15px;color:#444;letter-spacing:-0.200px;">45</span>
<span class="t" style="left:8.72px;top:659.00px;font-size:15px;color:#444;letter-spacing:-0.200px;">46</span>
<span class="t" style="left:8.77px;top:683.00px;font-size:15px;color:#444;letter-spacing:-0.200px;">47</span>
<span class="t" style="left:8.72px;top:707.00px;font-size:15px;color:#444;letter-spacing:-0.200px;">48</span>
<span class="t" style="left:8.75px;top:731.00px;font-size:15px;color:#444;letter-spacing:-0.200px;">49</span>
<span class="t" style="left:8.54px;top:755.00px;font-size:15px;color:#444;letter-spacing:-0.200px;">50</span>
<span class="t" style="left:8.62px;top:779.00px;font-size:15px;color:#444;letter-spacing:-0.200px;">51</span>
<span class="t" style="left:8.63px;top:803.00px;font-size:15px;color:#444;letter-spacing:-0.200px;">52</span>
<span class="t" style="left:8.58px;top:827.00px;font-size:15px;color:#444;letter-spacing:-0.200px;">53</span>
<span class="t" style="left:8.48px;top:851.00px;font-size:15px;color:#444;letter-spacing:-0.200px;">54</span>
<span class="t" style="left:8.57px;top:875.00px;font-size:15px;color:#444;letter-spacing:-0.200px;">55</span>
<span class="t" style="left:8.58px;top:899.00px;font-size:15px;color:#444;letter-spacing:-0.200px;">56</span>
<span class="t" style="left:8.63px;top:923.00px;font-size:15px;color:#444;letter-spacing:-0.200px;">57</span>
<span class="t" style="left:8.58px;top:947.00px;font-size:15px;color:#444;letter-spacing:-0.200px;">58</span>
<div class="b" style="left:1897px;top:270px;width:21px;height:683px;background:#f5f5f5;border-radius:10px 10px 0 0;"></div>
<svg class="b" style="left:1901px;top:275px;" width="14" height="11" viewBox="0 0 14 11"><path d="M6.6 1.4 Q7 1 7.4 1.4 L12.4 8.2 Q12.8 9 11.8 9 H2.2 Q1.2 9 1.6 8.2 Z" fill="#767676"/></svg>
<div class="b" style="left:1902px;top:549px;width:11.4px;height:231px;background:#707070;border-radius:5.7px;"></div>
<svg class="b" style="left:1901px;top:940px;" width="14" height="11" viewBox="0 0 14 11"><path d="M6.6 9.4 Q7 9.8 7.4 9.4 L12.4 2.6 Q12.8 1.8 11.8 1.8 H2.2 Q1.2 1.8 1.6 2.6 Z" fill="#767676"/></svg>
<!-- p_chart -->
<div class="b" style="left:127px;top:344px;width:608px;height:357px;background:#fff;border:1px solid #d9d9d9;box-sizing:border-box;"></div>
<span class="t" style="left:307.99px;top:361.00px;font-size:20.8px;color:#595959;letter-spacing:0.174px;">Returned Item Per Region</span>
<svg class="b" style="left:0;top:0" width="760" height="710"><path d="M371.40 543.40 L371.40 404.90 A138.5 138.5 0 0 1 446.28 426.89 Z" fill="#4472c4" stroke="#fff" stroke-width="2.4" stroke-linejoin="round"/><path d="M371.40 543.40 L446.28 426.89 A138.5 138.5 0 0 1 497.38 485.87 Z" fill="#ed7d31" stroke="#fff" stroke-width="2.4" stroke-linejoin="round"/><path d="M371.40 543.40 L497.38 485.87 A138.5 138.5 0 0 1 332.38 676.29 Z" fill="#a5a5a5" stroke="#fff" stroke-width="2.4" stroke-linejoin="round"/><path d="M371.40 543.40 L332.38 676.29 A138.5 138.5 0 0 1 245.42 485.87 Z" fill="#ffc000" stroke="#fff" stroke-width="2.4" stroke-linejoin="round"/><path d="M371.40 543.40 L245.42 485.87 A138.5 138.5 0 0 1 371.40 404.90 Z" fill="#5b9bd5" stroke="#fff" stroke-width="2.4" stroke-linejoin="round"/></svg>
<span class="t" style="left:387.10px;top:422.00px;font-size:13.1px;color:#404040;letter-spacing:0.130px;">9.09%</span>
<span class="t" style="left:440.00px;top:462.00px;font-size:13.1px;color:#404040;letter-spacing:0.130px;">9.09%</span>
<span class="t" style="left:436.20px;top:614.00px;font-size:13.1px;color:#404040;letter-spacing:0.186px;">36.36%</span>
<span class="t" style="left:252.65px;top:582.00px;font-size:13.1px;color:#404040;letter-spacing:0.217px;">27.27%</span>
<span class="t" style="left:283.80px;top:437.00px;font-size:13.1px;color:#404040;letter-spacing:0.285px;">18.18%</span>
<div class="b" style="left:624.3px;top:484.20000000000005px;width:6.8px;height:6.8px;background:#4472c4;"></div>
<span class="t" style="left:634.80px;top:481.00px;font-size:13.4px;color:#595959;letter-spacing:0.146px;">Eastern</span>
<div class="b" style="left:624.3px;top:512.2px;width:6.8px;height:6.8px;background:#ed7d31;"></div>
<span class="t" style="left:634.80px;top:509.00px;font-size:13.4px;color:#595959;letter-spacing:0.509px;">Northeastern</span>
<div class="b" style="left:624.3px;top:540.2px;width:6.8px;height:6.8px;background:#a5a5a5;"></div>
<span class="t" style="left:634.80px;top:537.00px;font-size:13.4px;color:#595959;letter-spacing:0.746px;">Northern</span>
<div class="b" style="left:624.3px;top:568.2px;width:6.8px;height:6.8px;background:#ffc000;"></div>
<span class="t" style="left:635.30px;top:565.00px;font-size:13.4px;color:#595959;letter-spacing:0.354px;">Southern</span>
<div class="b" style="left:624.3px;top:596.2px;width:6.8px;height:6.8px;background:#5b9bd5;"></div>
<span class="t" style="left:635.85px;top:593.00px;font-size:13.4px;color:#595959;letter-spacing:0.404px;">Western</span>
<div class="b" style="left:65px;top:757px;width:865px;height:91px;background:#fff;"></div>
<div class="b" style="left:79.4px;top:774.2px;width:32.6px;height:32.6px;background:#dde21c;border-radius:50%;"></div>
<span class="t" style="left:90.19px;top:782.00px;font-size:18.6px;color:#1a1a1a;font-weight:700;">3</span>
<span class="t" style="left:127.57px;top:780.00px;font-size:23.5px;color:#1c2340;letter-spacing:0.698px;">How does the shipping fee differ between regions? Can we find any</span>
<span class="t" style="left:128.51px;top:812.00px;font-size:23.5px;color:#1c2340;letter-spacing:0.726px;">other insights about the shipping trends?</span>
<div class="b" style="left:111px;top:947px;width:609px;height:40px;background:#fff;border:1px solid #d9d9d9;box-sizing:border-box;"></div>
<!-- p_bottom -->
<div class="b" style="left:0px;top:953px;width:1920px;height:40px;background:#e2eced;"></div>
<div class="b" style="left:556.5px;top:953px;width:177.5px;height:35px;background:#fff;border-radius:0 0 6px 6px;"></div>
<svg class="b" style="left:550.5px;top:953px;" width="6" height="6" viewBox="0 0 6 6"><path d="M0 0 H6 V6 Q6 0 0 0 Z" fill="#fff"/></svg>
<svg class="b" style="left:734px;top:953px;" width="6" height="6" viewBox="0 0 6 6"><path d="M6 0 H0 V6 Q0 0 6 0 Z" fill="#fff"/></svg>
<svg class="b" style="left:30px;top:964px;" width="12" height="16" viewBox="0 0 12 16"><path d="M9 2 L2.6 8 L9 14" fill="none" stroke="#a9adb0" stroke-width="1.4" stroke-linecap="round" stroke-linejoin="round"/></svg>
<svg class="b" style="left:70px;top:964px;" width="12" height="16" viewBox="0 0 12 16"><path d="M3 2 L9.4 8 L3 14" fill="none" stroke="#a9adb0" stroke-width="1.4" stroke-linecap="round" stroke-linejoin="round"/></svg>
<span class="t" style="left:150.62px;top:966.00px;font-size:17.4px;color:#333;letter-spacing:-1.116px;">Task1</span>
<span class="t" style="left:224.17px;top:966.00px;font-size:17.4px;color:#333;letter-spacing:-0.181px;">Data</span>
<span class="t" style="left:293.97px;top:966.00px;font-size:17.4px;color:#333;letter-spacing:-0.275px;">Reference Table</span>
<span class="t" style="left:451.17px;top:966.00px;font-size:17.4px;color:#333;letter-spacing:0.195px;">Pivot table</span>
<div class="b" style="left:209.2px;top:961.5px;width:1px;height:23px;background:#cfd6d9;"></div>
<div class="b" style="left:277.3px;top:961.5px;width:1px;height:23px;background:#cfd6d9;"></div>
<div class="b" style="left:435px;top:961.5px;width:1px;height:23px;background:#cfd6d9;"></div>
<div class="b" style="left:551px;top:961.5px;width:1px;height:23px;background:#cfd6d9;"></div>
<div class="b" style="left:739.2px;top:961.5px;width:1px;height:23px;background:#cfd6d9;"></div>
<span class="t" style="left:566.96px;top:961.00px;font-size:18px;color:#1f1f1f;letter-spacing:0.048px;-webkit-text-stroke:0.5px #1f1f1f;">Answers with graph</span>
<div class="b" style="left:567px;top:983px;width:157px;height:2px;background:#1b7344;"></div>
<svg class="b" style="left:791px;top:964.5px;" width="16" height="16" viewBox="0 0 16 16"><path d="M8 1 V15 M1 8 H15" stroke="#333" stroke-width="1.5"/></svg>
<div class="b" style="left:1154.5px;top:967px;width:3px;height:3px;background:#333;"></div>
<div class="b" style="left:1154.5px;top:972px;width:3px;height:3px;background:#333;"></div>
<div class="b" style="left:1154.5px;top:977px;width:3px;height:3px;background:#333;"></div>
<div class="b" style="left:1176px;top:962px;width:744px;height:21.4px;background:#f5f5f5;border-radius:10.7px 0 0 10.7px;"></div>
<svg class="b" style="left:1181px;top:966px;" width="11" height="13" viewBox="0 0 11 13"><path d="M1.6 6.1 Q1.2 6.5 1.6 6.9 L8.2 11.6 Q9 12 9 11 V2 Q9 1 8.2 1.4 Z" fill="#767676"/></svg>
<div class="b" style="left:1197px;top:966.8px;width:671px;height:11.4px;background:#707070;border-radius:5.7px;"></div>
<svg class="b" style="left:1907px;top:966px;" width="11" height="13" viewBox="0 0 11 13"><path d="M9.4 6.1 Q9.8 6.5 9.4 6.9 L2.8 11.6 Q2 12 2 11 V2 Q2 1 2.8 1.4 Z" fill="#767676"/></svg>
<div class="b" style="left:0px;top:993px;width:1920px;height:27px;background:#f5f5f5;"></div>
<span class="t" style="left:8.35px;top:1002.00px;font-size:12.8px;color:#3b3b3b;letter-spacing:-0.131px;">Ready</span>
<svg class="b" style="left:69px;top:997px;" width="20" height="20" viewBox="0 0 20 20">
<circle cx="8" cy="3.6" r="2.1" fill="none" stroke="#444" stroke-width="1.1"/>
<path d="M1.8 5.4 Q4.6 8.2 6 8 V13.6 L4 18.4 M14.2 5.4 Q11.4 8.2 10 8 V11 M6.2 12.6 L8 11.6 L9.4 13.6" fill="none" stroke="#444" stroke-width="1.1" stroke-linecap="round" stroke-linejoin="round"/>
<path d="M10.4 11.6 L17.6 18.4 M17.6 11.6 L10.4 18.4" stroke="#444" stroke-width="1.2" stroke-linecap="round"/></svg>
<span class="t" style="left:92.67px;top:1002.00px;font-size:12.8px;color:#3b3b3b;letter-spacing:-0.065px;">Accessibility: Investigate</span>
<div class="b" style="left:1548px;top:993px;width:49px;height:27px;background:#e0e0e0;"></div>
<svg class="b" style="left:1563px;top:998px;" width="18" height="17" viewBox="0 0 18 17"><rect x="1" y="1" width="16" height="15" fill="none" stroke="#444" stroke-width="1.2"/><path d="M6.3 1 V16 M11.6 1 V16 M1 6 H17 M1 11 H17" stroke="#444" stroke-width="1.1"/></svg>
<svg class="b" style="left:1614px;top:998px;" width="18" height="17" viewBox="0 0 18 17"><rect x="1" y="1" width="16" height="15" fill="none" stroke="#444" stroke-width="1.2"/><rect x="4.6" y="4.4" width="8.8" height="8.4" fill="none" stroke="#444" stroke-width="1.1"/><path d="M6.4 7.2 H11.6 M6.4 9.8 H11.6" stroke="#444" stroke-width="1"/></svg>
<svg class="b" style="left:1664px;top:998px;" width="18" height="17" viewBox="0 0 18 17"><rect x="1" y="1" width="16" height="15" fill="none" stroke="#444" stroke-width="1.2"/><path d="M7 1 V9 H1 M12.4 1 V9 H7" fill="none" stroke="#444" stroke-width="1.1"/></svg>
<div class="b" style="left:1705.6px;top:1005.6px;width:8px;height:1.2px;background:#444;"></div>
<div class="b" style="left:1721px;top:1006px;width:124px;height:1px;background:#8a8a8a;"></div>
<div class="b" style="left:1781.2px;top:1000px;width:5.4px;height:13.6px;background:#555;border-radius:1px;"></div>
<svg class="b" style="left:1851px;top:1001px;" width="11" height="11" viewBox="0 0 11 11"><path d="M5.5 1 V10 M1 5.5 H10" stroke="#444" stroke-width="1.2"/></svg>
<span class="t" style="left:1878.06px;top:1002.00px;font-size:12.4px;color:#3b3b3b;letter-spacing:-0.212px;">100%</span>
<!-- p_taskbar -->
<div class="b" style="left:0px;top:1020px;width:1920px;height:60px;background:#d0e6ee;"></div>
<div class="b" style="left:0px;top:1020px;width:1920px;height:1px;background:#b4c6cd;"></div>
<svg class="b" style="left:24px;top:1032px;" width="34" height="31" viewBox="0 0 34 31">
<defs><linearGradient id="mn" x1="1" y1="0" x2="0" y2="1"><stop offset="0" stop-color="#f7cb45"/><stop offset="0.55" stop-color="#f4ae2c"/><stop offset="1" stop-color="#ef8418"/></linearGradient>
<linearGradient id="cl" x1="0" y1="0" x2="0" y2="1"><stop offset="0" stop-color="#b4c8f0"/><stop offset="0.55" stop-color="#d6e2fb"/><stop offset="1" stop-color="#a9bde6"/></linearGradient></defs>
<path d="M20.2 4.25 A13 13 0 1 1 3.9 20.5 A13.6 13.6 0 0 0 20.2 4.25 Z" fill="url(#mn)"/>
<path d="M3.6 12.6 Q1 12.4 1.2 10 Q1.6 7.6 4.4 7.6 Q5 3.2 9.4 2.2 Q13 2.4 14 6 Q18 6 18.2 9.8 Q18 12.6 15.4 12.6 Z" fill="url(#cl)"/>
<path d="M16.4 28 Q13.8 27.8 14 25.4 Q14.4 23 17 23.2 Q17.8 19 22 18.4 Q25.8 18.6 26.6 22 Q30.6 22 30.8 25.4 Q30.6 28 28 28 Z" fill="url(#cl)"/>
</svg>
<span class="t" style="left:63.76px;top:1033.00px;font-size:14.8px;color:#1f1f1f;letter-spacing:-0.260px;">27°C</span>
<span class="t" style="left:63.30px;top:1053.00px;font-size:14.6px;color:#575757;letter-spacing:0.262px;">Partly cloudy</span>
<svg class="b" style="left:310px;top:1035.6px;" width="30" height="30" viewBox="0 0 30 30">
<defs><linearGradient id="wn" x1="0" y1="0" x2="1" y2="1"><stop offset="0" stop-color="#4fc6f8"/><stop offset="1" stop-color="#0a74d4"/></linearGradient></defs>
<rect x="0.2" y="0.2" width="14" height="14" rx="1.2" fill="url(#wn)"/><rect x="15.4" y="0.2" width="14" height="14" rx="1.2" fill="url(#wn)"/>
<rect x="0.2" y="15.4" width="14" height="14" rx="1.2" fill="url(#wn)"/><rect x="15.4" y="15.4" width="14" height="14" rx="1.2" fill="url(#wn)"/></svg>
<div class="b" style="left:357.5px;top:1030.5px;width:272.5px;height:38.8px;background:#ecf5f8;border-radius:19.4px;box-shadow:0 0 0 1px rgba(120,150,165,.28), 0 1px 1.5px rgba(0,0,0,.12);overflow:hidden;"></div>
<svg class="b" style="left:370px;top:1040.5px;" width="21" height="21" viewBox="0 0 21 21"><circle cx="8.6" cy="8.6" r="6.4" fill="none" stroke="#1f1f1f" stroke-width="1.9"/><path d="M13.4 13.4 L18.6 18.8" stroke="#1f1f1f" stroke-width="2.1" stroke-linecap="round"/></svg>
<span class="t" style="left:401.74px;top:1044.00px;font-size:16.8px;color:#4a4a4a;letter-spacing:-0.179px;">Search</span>
<svg class="b" style="left:570px;top:1031px;" width="60" height="38" viewBox="0 0 60 38">
<defs><clipPath id="pc"><path d="M0 0 H41 A19 19 0 0 1 41 38 H0 Z"/></clipPath>
<linearGradient id="au" x1="0" y1="0" x2="1" y2="0"><stop offset="0" stop-color="#f6c34a"/><stop offset="0.5" stop-color="#f19a2e"/><stop offset="1" stop-color="#f3b24a"/></linearGradient></defs>
<g clip-path="url(#pc)">
<ellipse cx="36" cy="14" rx="26" ry="16" fill="url(#au)"/>
<ellipse cx="22" cy="10" rx="9" ry="7" fill="#ef8a2a"/>
<ellipse cx="44" cy="12" rx="11" ry="9" fill="#f4a63a"/>
<ellipse cx="33" cy="6" rx="8" ry="5" fill="#e9702a"/>
<ellipse cx="14" cy="18" rx="8" ry="5" fill="#8fae5a" transform="rotate(-25 14 18)"/>
<ellipse cx="13" cy="28" rx="9" ry="6" fill="#e56a3a" transform="rotate(-35 13 28)"/>
<path d="M0 38 Q14 34 24 30 Q38 24 60 26 V38 Z" fill="#d9c58a"/>
<path d="M0 38 Q18 36 30 31 Q42 27 60 30 V38 Z" fill="#b9ad6a"/>
<path d="M18 36 Q30 30 48 28 L52 31 Q34 33 24 38 Z" fill="#e8dcae"/>
<path d="M22.4 30 L24.6 8 M24 16 L20.6 11 M24.2 13 L27.4 8.6" stroke="#8a3f1e" stroke-width="1.6" fill="none" stroke-linecap="round"/>
<path d="M30.6 28 L32 6 M31.6 14 L28.6 9 M31.8 11 L35 7" stroke="#8a3f1e" stroke-width="1.5" fill="none" stroke-linecap="round"/>
<path d="M39 30 L40 9 M39.8 16 L36.6 11.6 M39.9 14 L43.6 9.6" stroke="#8a3f1e" stroke-width="1.8" fill="none" stroke-linecap="round"/>
<path d="M47.4 27 L48 11 M47.8 17 L45.2 13 M47.9 15 L50.6 11.4" stroke="#8a3f1e" stroke-width="1.4" fill="none" stroke-linecap="round"/>
</g></svg>
<svg class="b" style="left:646px;top:1035px;" width="34" height="32" viewBox="0 0 34 32">
<defs><linearGradient id="cp1" x1="0" y1="0" x2="1" y2="1"><stop offset="0" stop-color="#2a7de1"/><stop offset="0.5" stop-color="#39b8c9"/><stop offset="1" stop-color="#9bd34a"/></linearGradient>
<linearGradient id="cp2" x1="0" y1="0" x2="1" y2="1"><stop offset="0" stop-color="#7b5be6"/><stop offset="0.6" stop-color="#e858a8"/><stop offset="1" stop-color="#f7a13d"/></linearGradient></defs>
<path d="M9 3 H19 Q22.4 3 23.2 6.2 L24.6 11 H14.6 Q12.2 11 11.4 13.6 L9.6 20.6 Q8.8 23.4 5.8 23.4 H4.4 Q1.4 23.4 2.2 20.2 L5.6 6.2 Q6.4 3 9 3 Z" fill="url(#cp1)"/>
<path d="M23 27 H13 Q10 27 9.2 24 L8 19.6 H17.6 Q20 19.6 20.8 17 L22.6 9.8 Q23.4 7 26.4 7 H28 Q31 7 30.2 10.2 L26.6 24 Q25.8 27 23 27 Z" fill="url(#cp2)"/>
<rect x="9.6" y="20.8" width="21" height="9.8" rx="2" fill="#ffd335"/>
<text x="20.1" y="28.6" font-family="Liberation Sans" font-weight="700" font-size="8.2" fill="#1b1b1b" text-anchor="middle" letter-spacing="0.3">PRE</text></svg>
<svg class="b" style="left:700px;top:1035px;" width="32" height="30" viewBox="0 0 32 30">
<rect x="1" y="8.4" width="21.6" height="20.4" rx="2.4" fill="#1c1c1c"/>
<rect x="9" y="0.8" width="21.6" height="20.4" rx="2.4" fill="#fafcfd" fill-opacity="0.82" stroke="#e6eef2" stroke-width="0.6"/>
<rect x="9" y="8.4" width="13.6" height="12.8" fill="#c9c9c9" fill-opacity="0.75"/></svg>
<svg class="b" style="left:755px;top:1035px;" width="31" height="30" viewBox="0 0 31 30">
<defs><linearGradient id="ch" x1="0" y1="0" x2="1" y2="1"><stop offset="0" stop-color="#8f7be8"/><stop offset="1" stop-color="#5b4bc4"/></linearGradient></defs>
<path d="M15.6 1 A14 14 0 1 1 8.6 27.2 L1.6 29 L3.6 22.4 A14 14 0 0 1 15.6 1 Z" fill="url(#ch)"/>
<rect x="7.6" y="9.6" width="11.4" height="10.4" rx="2.2" fill="#fff"/><path d="M19.6 13.2 L24 10.4 V19.4 L19.6 16.6 Z" fill="#fff"/></svg>
<svg class="b" style="left:810px;top:1035px;" width="32" height="30" viewBox="0 0 32 30">
<path d="M1 5 Q1 2.2 3.6 2.2 H10.6 L13.6 5.2 H28.4 Q31 5.2 31 7.8 V12 H1 Z" fill="#f2b01e"/>
<rect x="1" y="7.6" width="30" height="21" rx="2" fill="#fdd35a"/>
<rect x="1" y="7.6" width="30" height="8" rx="2" fill="#ffe07a"/>
<path d="M5.6 28.6 V23 Q5.6 20.6 8 20.6 H24 Q26.4 20.6 26.4 23 V28.6 Z" fill="#2f7fd8"/>
<rect x="9.6" y="23.4" width="12.8" height="2.2" rx="1.1" fill="#1a56a8"/></svg>
<div class="b" style="left:821px;top:1070px;width:9px;height:3.6px;background:#7d8a8f;border-radius:1.8px;"></div>
<svg class="b" style="left:864px;top:1035px;" width="33" height="31" viewBox="0 0 33 31">
<defs><linearGradient id="ed1" x1="0" y1="0" x2="1" y2="0"><stop offset="0" stop-color="#2a8fd8"/><stop offset="0.6" stop-color="#35c1b0"/><stop offset="1" stop-color="#7ad45a"/></linearGradient>
<linearGradient id="ed2" x1="0" y1="0" x2="0" y2="1"><stop offset="0" stop-color="#1b6fc4"/><stop offset="1" stop-color="#134a9a"/></linearGradient></defs>
<circle cx="16.4" cy="15.4" r="14.6" fill="url(#ed2)"/>
<path d="M2 13.4 Q3.4 1 16.6 0.8 Q28.6 1.4 31 12.6 Q31.4 19 25 19.6 Q20.4 19.6 20 16.2 Q21.6 13 19.2 10.6 Q15.6 7.8 10.8 9.4 Q4.6 11.8 4 18.8 Q2 16.8 2 13.4 Z" fill="url(#ed1)"/>
<path d="M11.4 14.6 Q10.8 20.8 17 23.2 Q23 24.6 28 21.4 Q24.4 29.6 16.2 30 Q8 29.6 5.4 22.6 Q4.6 16 11.4 14.6 Z" fill="#1e8fd6"/>
<path d="M12.6 12.6 Q16.8 10.8 19.4 14 Q20.2 16 19 18 Q14.6 18.6 12.4 15.4 Z" fill="#d0e6ee"/></svg>
<svg class="b" style="left:919px;top:1033px;" width="33" height="33" viewBox="0 0 33 33">
<path d="M10.6 7.6 V4.6 Q10.6 2.4 12.8 2.4 H20.2 Q22.4 2.4 22.4 4.6 V7.6" fill="none" stroke="#3aa0e8" stroke-width="2"/>
<path d="M2 7.6 H31 V27 Q31 31.6 26.4 31.6 H6.6 Q2 31.6 2 27 Z" fill="#17509a"/>
<rect x="10.2" y="13" width="5.6" height="5.6" fill="#f25022"/><rect x="17" y="13" width="5.6" height="5.6" fill="#7fba00"/>
<rect x="10.2" y="19.8" width="5.6" height="5.6" fill="#00a4ef"/><rect x="17" y="19.8" width="5.6" height="5.6" fill="#ffb900"/></svg>
<svg class="b" style="left:975px;top:1034px;" width="32" height="31" viewBox="0 0 32 31"><defs><linearGradient id="dm" x1="0" y1="0" x2="1" y2="0"><stop offset="0" stop-color="#ff2aa0"/><stop offset="0.45" stop-color="#ff1a1a"/><stop offset="1" stop-color="#ff7a00"/></linearGradient></defs>
<path d="M15.8 0.6 L31 15.4 L15.8 30.4 L0.6 15.4 Z" fill="url(#dm)"/></svg>
<svg class="b" style="left:1031px;top:1027px;" width="38" height="40" viewBox="0 0 38 40">
<circle cx="15.8" cy="23.4" r="14.2" fill="#1793d1" stroke="#eaf6fb" stroke-width="1"/>
<path d="M10.4 19 Q10.6 14 15.8 14 Q21 14.2 20.8 18.6 Q20.6 21.4 17.6 23 Q16 24 16 26.4" fill="none" stroke="#fff" stroke-width="3.2" stroke-linecap="round"/>
<circle cx="16" cy="32" r="2" fill="#fff"/>
<circle cx="27.2" cy="10.4" r="9.2" fill="#1f6f82"/>
<rect x="21.4" y="6.6" width="11.6" height="7.8" rx="1" fill="none" stroke="#fff" stroke-width="1.1"/><path d="M21.8 7 L27.2 11 L32.6 7" fill="none" stroke="#fff" stroke-width="1.1"/></svg>
<svg class="b" style="left:1085px;top:1034px;" width="32" height="32" viewBox="0 0 32 32"><defs><linearGradient id="wp" x1="0" y1="0" x2="1" y2="1"><stop offset="0" stop-color="#a33be8"/><stop offset="0.55" stop-color="#e8327a"/><stop offset="1" stop-color="#f24a3a"/></linearGradient></defs>
<circle cx="16" cy="16" r="15" fill="url(#wp)"/>
<path d="M6.4 11.4 H10.2 L12.6 19.6 L15.2 11.4 H18.4 L20.8 19.6 L22.6 13.4 H26 L22.6 23.4 H19.2 L16.8 16 L14.4 23.4 H10.8 Z" fill="#fff"/>
<path d="M24.6 5.4 L25.4 7.6 L27.6 8.4 L25.4 9.2 L24.6 11.4 L23.8 9.2 L21.6 8.4 L23.8 7.6 Z" fill="#fff"/></svg>
<svg class="b" style="left:1140px;top:1034.6px;" width="32" height="32" viewBox="0 0 32 32">
<rect x="0.6" y="0.6" width="30.6" height="30.6" fill="#2f8d9a"/>
<rect x="17.4" y="0.6" width="9.4" height="30.6" fill="#e6ad10"/>
<rect x="22.6" y="0.6" width="4.2" height="30.6" fill="#c98f0a"/>
<rect x="10.2" y="9.4" width="9.4" height="21.8" fill="#f2c811"/>
<rect x="3.4" y="17.6" width="9.4" height="13.6" rx="1" fill="#f6da5a"/></svg>
<svg class="b" style="left:1195.6px;top:1034.6px;" width="31" height="31" viewBox="0 0 31 31"><defs><linearGradient id="fb" x1="0" y1="0" x2="0" y2="1"><stop offset="0" stop-color="#19aaff"/><stop offset="1" stop-color="#0866ff"/></linearGradient></defs>
<circle cx="15.4" cy="15.4" r="15" fill="url(#fb)"/>
<path d="M17.2 30.2 V19.6 H20.6 L21.2 15.6 H17.2 V13.2 Q17.2 11.2 19.4 11.2 H21.4 V7.6 Q19.8 7.4 18.2 7.4 Q13 7.4 13 12.8 V15.6 H9.4 V19.6 H13 V30.2 Z" fill="#fff"/></svg>
<div class="b" style="left:1207px;top:1070px;width:8px;height:3.6px;background:#7d8a8f;border-radius:1.8px;"></div>
<svg class="b" style="left:1251px;top:1035px;" width="30" height="30" viewBox="0 0 30 30">
<circle cx="15" cy="15" r="14.6" fill="#fff"/>
<path d="M15 15 L2.36 7.7 A14.6 14.6 0 0 1 27.64 7.7 Z" fill="#ea4335"/>
<path d="M15 15 L27.64 7.7 A14.6 14.6 0 0 1 15 29.6 Z" fill="#fbbc05"/>
<path d="M15 15 L15 29.6 A14.6 14.6 0 0 1 2.36 7.7 Z" fill="#34a853"/>
<path d="M15 8.4 H27.2 A14.6 14.6 0 0 0 2.36 7.7 L9.3 18.3 Z" fill="#ea4335"/>
<path d="M20.7 18.3 L15 29.6 A14.6 14.6 0 0 0 27.64 7.7 L15 8.4 Z" fill="#fbbc05"/>
<path d="M9.3 18.3 L2.36 7.7 A14.6 14.6 0 0 0 15 29.6 L20.7 18.3 Z" fill="#34a853"/>
<circle cx="15" cy="15" r="6.8" fill="#fff"/><circle cx="15" cy="15" r="5.4" fill="#4285f4"/></svg>
<svg class="b" style="left:1305px;top:1034px;" width="33" height="33" viewBox="0 0 33 33">
<path d="M28.6 9.6 Q23.6 3 15.6 4.2 Q6.6 6 5.8 16 Q6 26 15.6 28 Q23.6 29 28.8 22.4 L23.4 18.6 Q20.6 22.2 16.4 21.4 Q12.2 20.4 12.2 16 Q12.4 11.4 16.6 10.6 Q20.6 10 23.2 13.6 Z" fill="#d42a20"/>
<path d="M28.6 9.6 Q23.6 3 15.6 4.2 Q10 5.2 7.6 10 Q14 6.6 20 8.6 Q24 10.4 23.2 13.6 Z" fill="#ee4a3a"/>
<path d="M17 2.4 L19.2 3.4 L11.8 19.4 L9.6 18.4 Z" fill="#1a78c8"/>
<path d="M8.4 17.4 L13.6 20 L10.8 27.4 Q6.6 28.6 2.6 25 Q6.6 22.6 8.4 17.4 Z" fill="#e9c07a"/>
<path d="M4.4 25.6 L7.4 23.2 M7 27.2 L9.4 24.6" stroke="#b98a4a" stroke-width="0.9"/></svg>
<svg class="b" style="left:1361px;top:1035px;" width="30" height="30" viewBox="0 0 30 30">
<circle cx="15" cy="15" r="14.6" fill="#fff"/>
<path d="M15 15 L2.36 7.7 A14.6 14.6 0 0 1 27.64 7.7 Z" fill="#ea4335"/>
<path d="M15 15 L27.64 7.7 A14.6 14.6 0 0 1 15 29.6 Z" fill="#fbbc05"/>
<path d="M15 15 L15 29.6 A14.6 14.6 0 0 1 2.36 7.7 Z" fill="#34a853"/>
<path d="M15 8.4 H27.2 A14.6 14.6 0 0 0 2.36 7.7 L9.3 18.3 Z" fill="#ea4335"/>
<path d="M20.7 18.3 L15 29.6 A14.6 14.6 0 0 0 27.64 7.7 L15 8.4 Z" fill="#fbbc05"/>
<path d="M9.3 18.3 L2.36 7.7 A14.6 14.6 0 0 0 15 29.6 L20.7 18.3 Z" fill="#34a853"/>
<circle cx="15" cy="15" r="6.8" fill="#fff"/><circle cx="15" cy="15" r="5.4" fill="#4285f4"/></svg>
<svg class="b" style="left:1378px;top:1028px;" width="20" height="19" viewBox="0 0 20 19"><circle cx="10" cy="9.4" r="9" fill="#8a8f86"/><circle cx="10" cy="9.4" r="9" fill="none" stroke="#d9e3d9" stroke-width="0.8"/>
<path d="M4.4 4 Q10 -1 15.6 4 Q13 6 10 5.6 Q7 6 4.4 4 Z" fill="#2a2a2a"/><ellipse cx="10" cy="10.4" rx="4.4" ry="5.2" fill="#e2c3a8"/><path d="M3.4 17 Q10 12.6 16.6 17 Q13 19 10 18.6 Q7 19 3.4 17 Z" fill="#cfd8cf"/></svg>
<div class="b" style="left:1372px;top:1070px;width:8px;height:3.6px;background:#7d8a8f;border-radius:1.8px;"></div>
<svg class="b" style="left:1416.6px;top:1034.6px;" width="32" height="32" viewBox="0 0 32 32"><defs><linearGradient id="sk" x1="0" y1="0" x2="1" y2="1"><stop offset="0" stop-color="#28c4f4"/><stop offset="1" stop-color="#0a7fd8"/></linearGradient></defs>
<circle cx="9.6" cy="9.6" r="8.6" fill="url(#sk)"/><circle cx="21.6" cy="21.6" r="8.6" fill="url(#sk)"/><circle cx="15.6" cy="15.6" r="12.8" fill="url(#sk)"/>
<path d="M20.4 11.6 Q19.4 8.6 15.6 8.6 Q11.4 8.8 11.2 12 Q11.2 14.6 15.6 15.6 Q20 16.4 20.2 19.4 Q20 22.8 15.6 22.8 Q11.4 22.8 10.4 19.4" fill="none" stroke="#fff" stroke-width="2.8" stroke-linecap="round"/></svg>
<div class="b" style="left:1427px;top:1070px;width:8px;height:3.6px;background:#7d8a8f;border-radius:1.8px;"></div>
<svg class="b" style="left:1474px;top:1034px;" width="26" height="34" viewBox="0 0 26 34">
<rect x="1.4" y="4" width="22.6" height="26.6" rx="2.4" fill="#59c3f0"/>
<rect x="1.4" y="4" width="22.6" height="5.4" rx="2.4" fill="#2f9fe0"/>
<path d="M1.4 27 H24 V29.6 Q24 32 21.6 32 H3.8 Q1.4 32 1.4 29.6 Z" fill="#f6f0e4"/>
<path d="M1.4 29.6 H24 Q24 32.4 21.6 32.4 H3.8 Q1.4 32.4 1.4 29.6 Z" fill="#7a3a1e"/>
<path d="M5.6 12.6 H19.8 M5.6 16.6 H19.8 M5.6 20.6 H19.8 M5.6 24.4 H14" stroke="#176fb0" stroke-width="1.6"/>
<circle cx="5.4" cy="3.6" r="1.5" fill="#1a5f9a"/><circle cx="10.2" cy="3.6" r="1.5" fill="#1a5f9a"/><circle cx="15" cy="3.6" r="1.5" fill="#1a5f9a"/><circle cx="19.8" cy="3.6" r="1.5" fill="#1a5f9a"/></svg>
<div class="b" style="left:1482.5px;top:1070px;width:7.5px;height:3.6px;background:#7d8a8f;border-radius:1.8px;"></div>
<div class="b" style="left:1517px;top:1026px;width:48px;height:48px;background:#e6f2f6;border-radius:5px;box-shadow:0 0 0 1px rgba(255,255,255,.5);"></div>
<svg class="b" style="left:1525px;top:1035px;" width="32" height="30" viewBox="0 0 32 30">
<rect x="9.4" y="1" width="21" height="27" rx="1.8" fill="#21a366"/>
<rect x="9.4" y="1" width="10.5" height="9" fill="#21a366"/><rect x="19.9" y="1" width="10.5" height="9" fill="#33c481"/>
<rect x="9.4" y="10" width="10.5" height="9" fill="#107c41"/><rect x="19.9" y="10" width="10.5" height="9" fill="#21a366"/>
<rect x="9.4" y="19" width="10.5" height="9" fill="#185c37"/><rect x="19.9" y="19" width="10.5" height="9" fill="#107c41"/>
<rect x="1" y="6.4" width="16.6" height="16.6" rx="1.6" fill="#107c41"/>
<path d="M5.4 10.2 L8.2 10.2 L9.4 13 L10.6 10.2 L13.2 10.2 L10.8 14.7 L13.4 19.2 L10.6 19.2 L9.3 16.3 L8 19.2 L5.3 19.2 L7.9 14.7 Z" fill="#fff"/></svg>
<div class="b" style="left:1531px;top:1070px;width:19.5px;height:3.6px;background:#3a8aa6;border-radius:1.8px;"></div>
<svg class="b" style="left:1595px;top:1044px;" width="16" height="11" viewBox="0 0 16 11"><path d="M1.6 9.2 L8 2.4 L14.4 9.2" fill="none" stroke="#1f1f1f" stroke-width="1.7" stroke-linecap="round" stroke-linejoin="round"/></svg>
<span class="t" style="left:1635.80px;top:1034.00px;font-size:14.6px;color:#1f1f1f;letter-spacing:-0.682px;">ENG</span>
<span class="t" style="left:1641.38px;top:1054.00px;font-size:14.6px;color:#1f1f1f;letter-spacing:-1.501px;">US</span>
<svg class="b" style="left:1686.5px;top:1041px;" width="23" height="18" viewBox="0 0 23 18">
<path d="M1.4 6.6 Q11.5 -2.4 21.6 6.6" fill="none" stroke="#1f1f1f" stroke-width="1.5" stroke-linecap="round"/>
<path d="M4.8 10 Q11.5 4 18.2 10" fill="none" stroke="#1f1f1f" stroke-width="1.5" stroke-linecap="round"/>
<path d="M8 13.2 Q11.5 10 15 13.2" fill="none" stroke="#1f1f1f" stroke-width="1.5" stroke-linecap="round"/>
<circle cx="11.5" cy="15.8" r="1.5" fill="#1f1f1f"/></svg>
<svg class="b" style="left:1717px;top:1041px;" width="23" height="18" viewBox="0 0 23 18">
<path d="M1.6 6.2 H5 L10 2 V16 L5 11.8 H1.6 Z" fill="none" stroke="#1f1f1f" stroke-width="1.3" stroke-linejoin="round"/>
<path d="M12.8 6 Q14.6 9 12.8 12" fill="none" stroke="#1f1f1f" stroke-width="1.3" stroke-linecap="round"/>
<path d="M15.4 3.8 Q18.6 9 15.4 14.2" fill="none" stroke="#1f1f1f" stroke-width="1.3" stroke-linecap="round"/>
<path d="M18 1.8 Q22.6 9 18 16.2" fill="none" stroke="#1f1f1f" stroke-width="1.3" stroke-linecap="round"/></svg>
<svg class="b" style="left:1747px;top:1043px;" width="23" height="14" viewBox="0 0 23 14">
<rect x="1.2" y="1.2" width="17.6" height="11.2" rx="2.6" fill="none" stroke="#1f1f1f" stroke-width="1.4"/>
<rect x="3.4" y="3.4" width="13.2" height="6.8" rx="1.2" fill="#1f1f1f"/>
<path d="M20.4 4.6 V9 " stroke="#1f1f1f" stroke-width="1.8" stroke-linecap="round"/></svg>
<span class="t" style="left:1811.33px;top:1034.00px;font-size:14.6px;color:#1f1f1f;letter-spacing:0.436px;">9:13 pm</span>
<span class="t" style="left:1788.95px;top:1054.00px;font-size:14.6px;color:#1f1f1f;letter-spacing:0.485px;">30/09/2023</span>
<svg class="b" style="left:1876px;top:1040px;" width="19" height="21" viewBox="0 0 19 21">
<path d="M9.4 1 Q3.6 1.2 3.4 7.6 V11.6 L1.4 15.2 H17.4 L15.4 11.6 V7.6 Q15.2 1.2 9.4 1 Z" fill="#0f4a5c"/>
<path d="M6.6 16.8 Q9.4 20.8 12.2 16.8 Z" fill="#0f4a5c"/></svg>
</body></html>
